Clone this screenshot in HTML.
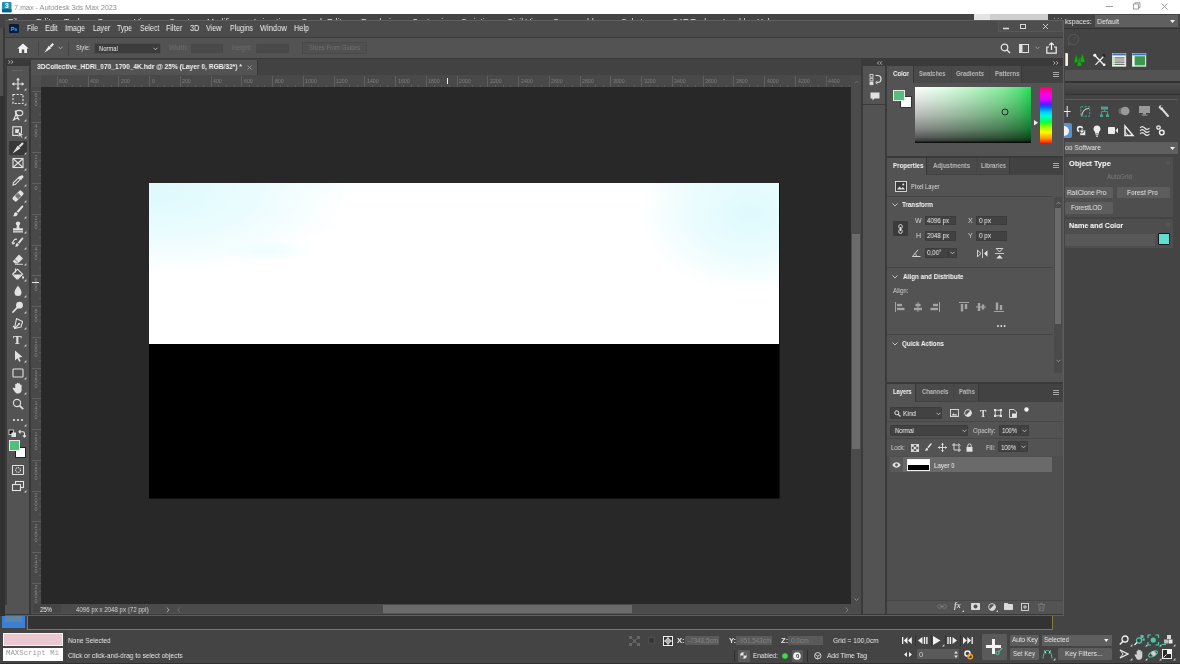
<!DOCTYPE html>
<html><head><meta charset="utf-8"><title>3ds Max / Photoshop</title>
<style>
*{box-sizing:border-box;margin:0;padding:0}
html,body{width:1180px;height:664px;overflow:hidden;background:#444;font-family:"Liberation Sans",sans-serif;}
.a{position:absolute}
.t{will-change:transform;position:absolute;white-space:nowrap;line-height:10px;height:10px;font-size:8px;color:#e4e4e4;transform:translateY(-50%)}
.b{font-weight:bold}
.d{color:#8a8a8a}
svg{position:absolute;overflow:visible}
#root{position:absolute;left:0;top:0;width:1180px;height:664px;overflow:hidden;background:#444;}
.fld{position:absolute;background:#454545;border:1px solid #3a3a3a}
.mbtn{position:absolute;background:#646464;border-radius:1px;color:#e6e6e6;font-size:8px;text-align:center;line-height:11px;white-space:nowrap}
</style></head><body><div id="root">

<!-- ===== 3ds Max chrome (behind) ===== -->
<div class="a" style="left:0;top:0;width:1180px;height:14px;background:#fff"></div>
<svg style="left:2.2px;top:1.5px" width="9.5" height="10.3" viewBox="0 0 9.5 10.3"><rect width="9.500" height="10.300" rx="1" fill="#1f93b4"/><rect x="0" y="7.300" width="9.500" height="3" fill="#0f5f78"/><text x="4.750" y="6.500" font-size="7" font-weight="bold" fill="#fff" text-anchor="middle" font-family="Liberation Sans, sans-serif">3</text></svg>
<div class="t " style="left:14px;top:7.5px;font-size:7.7px;color:#8c8c8c;transform:translateY(-50%) scaleX(0.936);transform-origin:0 50%;">7.max - Autodesk 3ds Max 2023</div>
<svg style="left:1100px;top:0px" width="80" height="14" viewBox="0 0 80 14"><g stroke="#8a8a8a" stroke-width="0.8" fill="none"><path d="M6 6.5h7"/><rect x="33.5" y="4" width="5" height="5"/><path d="M35 4v-1.3h5v5h-1.5"/><path d="M61.5 3.5l6 6m0-6l-6 6"/></g></svg>

<div class="a" style="left:0;top:14px;width:1180px;height:650px;background:#444"></div>
<div class="a" style="left:0;top:14px;width:1180px;height:8px;overflow:hidden;background:#444"><div class="t" style="left:7.5px;top:7.700px;font-size:8.5px;color:#dcdcdc">File</div><div class="t" style="left:35.5px;top:7.700px;font-size:8.5px;color:#dcdcdc">Edit</div><div class="t" style="left:64px;top:7.700px;font-size:8.5px;color:#dcdcdc">Tools</div><div class="t" style="left:97px;top:7.700px;font-size:8.5px;color:#dcdcdc">Group</div><div class="t" style="left:134px;top:7.700px;font-size:8.5px;color:#dcdcdc">Views</div><div class="t" style="left:169px;top:7.700px;font-size:8.5px;color:#dcdcdc">Create</div><div class="t" style="left:207px;top:7.700px;font-size:8.5px;color:#dcdcdc">Modifiers</div><div class="t" style="left:252px;top:7.700px;font-size:8.5px;color:#dcdcdc">Animation</div><div class="t" style="left:301px;top:7.700px;font-size:8.5px;color:#dcdcdc">Graph Editors</div><div class="t" style="left:361px;top:7.700px;font-size:8.5px;color:#dcdcdc">Rendering</div><div class="t" style="left:412px;top:7.700px;font-size:8.5px;color:#dcdcdc">Customize</div><div class="t" style="left:461px;top:7.700px;font-size:8.5px;color:#dcdcdc">Scripting</div><div class="t" style="left:507px;top:7.700px;font-size:8.5px;color:#dcdcdc">Civil View</div><div class="t" style="left:553px;top:7.700px;font-size:8.5px;color:#dcdcdc">Scene add-ons</div><div class="t" style="left:621px;top:7.700px;font-size:8.5px;color:#dcdcdc">Substance</div><div class="t" style="left:672px;top:7.700px;font-size:8.5px;color:#dcdcdc">CAT Tools</div><div class="t" style="left:721px;top:7.700px;font-size:8.5px;color:#dcdcdc">Arnold</div><div class="t" style="left:757px;top:7.700px;font-size:8.5px;color:#dcdcdc">Help</div></div>
<div class="a" style="left:974px;top:14px;width:74px;height:7px;background:#cfcfcf;"></div>
<div class="a" style="left:974px;top:14px;width:16px;height:7px;background:#e4e4e4;"></div>
<div class="t " style="left:1053px;top:18.7px;color:#aaa;font-size:8px;letter-spacing:1px">···</div>
<div class="a" style="left:0px;top:28px;width:3px;height:68px;background:#505050;"></div>
<div class="a" style="left:3px;top:28px;width:2.3px;height:68px;background:#383838;"></div>
<div class="a" style="left:0px;top:96px;width:5.3px;height:520.3px;background:#313131;"></div>

<div class="t " style="left:1064.7px;top:21.5px;font-size:7.6px;color:#e6e6e6;transform:translateY(-50%) scaleX(0.894);transform-origin:0 50%;">kspaces:</div>
<div class="a" style="left:1095px;top:15.4px;width:83px;height:11.6px;background:#5f5f5f;"></div>
<div class="t " style="left:1097px;top:21.5px;font-size:7.6px;color:#e6e6e6;transform:translateY(-50%) scaleX(0.914);transform-origin:0 50%;">Default</div>
<svg style="left:1169.5px;top:20px" width="5" height="3" viewBox="0 0 5 3"><path d="M0 0h5L2.500 3z" fill="#f2f2f2"/></svg>
<div class="a" style="left:1064px;top:27.5px;width:116px;height:1px;background:#333;"></div>
<svg style="left:1066.5px;top:32.5px" width="13" height="13" viewBox="0 0 13 13"><circle cx="6.500" cy="6.500" r="5.200" stroke="#5a5a5a" stroke-width="1" fill="none"/><path d="M6.500 6.500l2-2.500" stroke="#5a5a5a" stroke-width="0.900"/><path d="M2 9.500l-.5 2.500 2.200-.8" stroke="#5a5a5a" stroke-width="0.900" fill="none"/></svg>
<div class="a" style="left:1065px;top:52.6px;width:3px;height:13.6px;background:#f4efd8;border-left:1px solid #e0c060;border-radius:1px"></div>
<svg style="left:1072.9px;top:52.6px" width="13" height="13.6" viewBox="0 0 13 13.6"><path d="M3.200 1l2.200 8.500H1zM9.300 .3l2.800 9H6.500zM6.300 3.500l2.500 9.500H3.800z" fill="#1fa51f"/><path d="M3.200 1l2.200 8.500H1zM9.300 .3l2.800 9H6.500zM6.300 3.500l2.500 9.500H3.800z" fill="none" stroke="#0d6e0d" stroke-width="0.400"/></svg>
<svg style="left:1092.5px;top:52.6px" width="13" height="13.6" viewBox="0 0 13 13.6"><path d="M1.500 2l9.500 10" stroke="#f4f4f4" stroke-width="1.300" stroke-linecap="round"/><path d="M11.500 2.500L2.500 12" stroke="#f4f4f4" stroke-width="1.100"/><path d="M9 1.200l3 -.5 .8 2.600-2 1.200z" fill="#2a2a2a"/><circle cx="1.800" cy="2.200" r="1.500" fill="#f4f4f4"/><circle cx="11.200" cy="11.800" r="1.300" fill="#f4f4f4"/></svg>
<svg style="left:1112.2px;top:52.6px" width="14.2" height="13.6" viewBox="0 0 14.2 13.6"><rect x="0.400" y="0.400" width="13.400" height="12.800" fill="#f6f6f6" stroke="#dfeedd" stroke-width="0.800"/><rect x="0.400" y="0.400" width="13.400" height="2" fill="#3b6fc4"/><path d="M3 4.800h9.500M3 7h9.500M3 9.200h9.500M3 11.400h9.500" stroke="#6b6b6b" stroke-width="1.200"/><path d="M1.500 4.800h1M1.500 7h1M1.500 9.200h1M1.500 11.400h1" stroke="#2da12d" stroke-width="1.200"/></svg>
<svg style="left:1131.9px;top:52.6px" width="14.2" height="13.6" viewBox="0 0 14.2 13.6"><rect x="0.400" y="0.400" width="13.400" height="12.800" fill="#f6f6f6" stroke="#dfeedd" stroke-width="0.800"/><rect x="0.400" y="0.400" width="13.400" height="2" fill="#3b6fc4"/><rect x="2.600" y="3.200" width="10.400" height="9.200" fill="#3a9850"/></svg>
<div class="a" style="left:1064.7px;top:69.6px;width:115.3px;height:11.5px;background:#535353;"></div>
<div class="a" style="left:1064.7px;top:81.1px;width:115.3px;height:2px;background:#333;"></div>
<div class="a" style="left:1064.7px;top:83px;width:115.3px;height:10.5px;background:#4a4a4a;background:linear-gradient(#4e4e4e,#3e3e3e)"></div>
<div class="a" style="left:1064.7px;top:93.5px;width:115.3px;height:1.5px;background:#333;"></div>
<div class="a" style="left:1064.7px;top:98.5px;width:113.3px;height:1px;background:#5c5c5c;"></div>
<svg style="left:1064px;top:105.5px" width="6.5" height="11" viewBox="0 0 6.5 11"><path d="M3.200 0v11M0 5.500h6.500" stroke="#ececec" stroke-width="1"/></svg>
<svg style="left:1079.7px;top:105.5px" width="10.5" height="11" viewBox="0 0 10.5 11"><rect x="0.800" y="0.800" width="8.900" height="9.400" fill="none" stroke="#44a590" stroke-width="0.900" stroke-dasharray="2.500 1"/><path d="M1.800 9.800C2.200 5.500 4.500 2.800 9 2.200" stroke="#bdbdbd" stroke-width="1.100" fill="none"/></svg>
<svg style="left:1100px;top:105.5px" width="9" height="11" viewBox="0 0 9 11"><rect x="1" y="0.600" width="7" height="3" fill="#44a590"/><path d="M4.500 3.600v2M1.500 10.500v-5h6v5" stroke="#44a590" stroke-width="0.900" fill="none"/><rect x="0" y="8.500" width="3" height="2.500" fill="#44a590"/><rect x="6" y="8.500" width="3" height="2.500" fill="#44a590"/></svg>
<svg style="left:1118.3px;top:106px" width="12" height="10" viewBox="0 0 12 10"><circle cx="4" cy="5" r="3.600" fill="#6a6a6a"/><circle cx="7.200" cy="5" r="4.300" fill="#9a9a9a"/></svg>
<svg style="left:1138.6px;top:106px" width="11" height="10" viewBox="0 0 11 10"><rect x="0" y="0" width="11" height="7" fill="#9a9a9a"/><rect x="4" y="7" width="3" height="1.500" fill="#9a9a9a"/><rect x="2.500" y="8.600" width="6" height="1" fill="#9a9a9a"/></svg>
<svg style="left:1158.3px;top:105px" width="11" height="12" viewBox="0 0 11 12"><path d="M3.500 3.500l6.500 7.500" stroke="#dcdcdc" stroke-width="2" stroke-linecap="round"/><path d="M0.800 2.800c-.3-1.500 1-2.800 2.600-2.500L2.500 2l1 1 1.500-.8c.3 1.500-1 2.800-2.600 2.400z" fill="#dcdcdc"/></svg>
<div class="a" style="left:1064px;top:122.8px;width:8.3px;height:15px;background:#5b8fd0;border-radius:0 2px 2px 0"></div>
<svg style="left:1064px;top:125.5px" width="6" height="10" viewBox="0 0 6 10"><path d="M0 0a5 5 0 0 1 0 10z" fill="#f2f2f2"/></svg>
<svg style="left:1076px;top:125px" width="10" height="11" viewBox="0 0 10 11"><circle cx="4" cy="4" r="3.200" fill="#ececec"/><circle cx="4" cy="4" r="1.600" fill="#444"/><rect x="4" y="5" width="5.600" height="5.400" fill="#ececec" stroke="#444" stroke-width="0.600"/><circle cx="5.800" cy="5.800" r="2.200" fill="none" stroke="#444" stroke-width="0.800"/></svg>
<svg style="left:1092.5px;top:124.5px" width="8" height="12" viewBox="0 0 8 12"><path d="M4 .5a3.500 3.500 0 0 1 2 6.400V8.500H2V6.900A3.500 3.500 0 0 1 4 .5z" fill="#ececec"/><rect x="2.500" y="9.200" width="3" height="1" fill="#ececec"/><rect x="3" y="10.700" width="2" height="1" fill="#ececec"/></svg>
<svg style="left:1107.5px;top:126px" width="10" height="9" viewBox="0 0 10 9"><rect x="0" y="1" width="7" height="7" rx=".8" fill="#ececec"/><path d="M7.500 4.500L10 1.800v5.400z" fill="#ececec"/></svg>
<svg style="left:1123.7px;top:124.5px" width="9.5" height="11.5" viewBox="0 0 9.5 11.5"><path d="M1 1v9.500h8z" fill="none" stroke="#ececec" stroke-width="1.500"/><path d="M1 6.500l2.800 3.500" stroke="#ececec" stroke-width="0.800"/></svg>
<svg style="left:1140px;top:125.5px" width="9.5" height="10" viewBox="0 0 9.5 10"><path d="M0 2c1.500-1.800 3-1.800 4.700 0s3.200 1.800 4.800 0M0 5c1.500-1.800 3-1.800 4.700 0s3.200 1.800 4.800 0M0 8c1.500-1.800 3-1.800 4.700 0s3.200 1.800 4.800 0" stroke="#ececec" stroke-width="1.100" fill="none"/></svg>
<svg style="left:1156.3px;top:125px" width="9" height="11" viewBox="0 0 9 11"><circle cx="2.500" cy="2.500" r="1.700" stroke="#ececec" stroke-width="1.300" fill="none"/><circle cx="5.800" cy="7.500" r="2.300" stroke="#ececec" stroke-width="1.500" fill="none"/></svg>
<div class="a" style="left:1064.7px;top:141.8px;width:113.3px;height:12.2px;background:#5f5f5f;"></div>
<div class="t " style="left:1064.7px;top:148px;font-size:7.6px;color:#e6e6e6;transform:translateY(-50%) scaleX(0.888);transform-origin:0 50%;">oo Software</div>
<svg style="left:1169.5px;top:146.5px" width="5" height="3" viewBox="0 0 5 3"><path d="M0 0h5L2.500 3z" fill="#f2f2f2"/></svg>
<div class="a" style="left:1065.4px;top:157.4px;width:107.8px;height:59.2px;background:#4e4e4e;border-radius:1px"></div>
<div class="t b" style="left:1068.8px;top:163.9px;font-size:7.6px;color:#ffffff;transform:translateY(-50%) scaleX(0.969);transform-origin:0 50%;">Object Type</div>
<svg style="left:1165.5px;top:160.5px" width="4" height="4" viewBox="0 0 4 4"><path d="M0 1h4M0 3h4M1 0v4M3 0v4" stroke="#5e5e5e" stroke-width="0.600"/></svg>
<div class="t " style="left:1106.8px;top:177.3px;font-size:7.6px;color:#7c7c7c;transform:translateY(-50%) scaleX(0.834);transform-origin:0 50%;">AutoGrid</div>
<div class="a" style="left:1065.4px;top:186.8px;width:47.8px;height:11.5px;background:#5d5d5d;border-radius:1.500px"></div>
<div class="t " style="left:1066.8px;top:193px;font-size:7.4px;color:#e6e6e6;transform:translateY(-50%) scaleX(0.861);transform-origin:0 50%;">RailClone Pro</div>
<div class="a" style="left:1117px;top:186.8px;width:52.8px;height:11.5px;background:#5d5d5d;border-radius:1.500px"></div>
<div class="t " style="left:1127.1px;top:193px;font-size:7.4px;color:#e6e6e6;transform:translateY(-50%) scaleX(0.892);transform-origin:0 50%;">Forest Pro</div>
<div class="a" style="left:1065.4px;top:202.4px;width:47.8px;height:11.2px;background:#5d5d5d;border-radius:1.500px"></div>
<div class="t " style="left:1070.8px;top:208.2px;font-size:7.4px;color:#e6e6e6;transform:translateY(-50%) scaleX(0.862);transform-origin:0 50%;">ForestLOD</div>
<div class="a" style="left:1065.4px;top:219.3px;width:107.8px;height:28.5px;background:#4e4e4e;border-radius:1px"></div>
<div class="t b" style="left:1068.8px;top:225.7px;font-size:7.6px;color:#ffffff;transform:translateY(-50%) scaleX(0.930);transform-origin:0 50%;">Name and Color</div>
<svg style="left:1165.5px;top:222.5px" width="4" height="4" viewBox="0 0 4 4"><path d="M0 1h4M0 3h4M1 0v4M3 0v4" stroke="#5e5e5e" stroke-width="0.600"/></svg>
<div class="a" style="left:1065.4px;top:233.6px;width:89.6px;height:12.8px;background:#585858;border-radius:1px"></div>
<div class="a" style="left:1157.9px;top:233.2px;width:12.2px;height:12.2px;background:#5fdfd0;border:1px solid #151515;border-radius:1px"></div>

<div class="a" style="left:27px;top:614px;width:1026px;height:15.9px;background:#333333;border:1.7px solid #7f7d3e;border-top:none"></div>
<div class="a" style="left:2px;top:615.5px;width:23px;height:12.8px;background:#3a80d8;"></div>
<div class="a" style="left:5px;top:616.3px;width:17px;height:5.5px;background:#5f84a8;"></div>
<div class="a" style="left:0px;top:662.5px;width:1180px;height:1.5px;background:#303030;"></div>
<div class="a" style="left:3px;top:632.9px;width:60px;height:13.6px;background:#e9c8d0;border:1px solid #f6f6f6"></div>
<div class="a" style="left:3px;top:647.6px;width:60px;height:13.6px;background:#ffffff;"></div>
<div class="t " style="left:6.1px;top:652.8px;font-size:7.4px;color:#9a9a9a;font-family:'Liberation Mono',monospace;transform:translateY(-50%) scaleX(0.994);transform-origin:0 50%;">MAXScript Mi</div>
<div class="a" style="left:65px;top:631px;width:1px;height:32px;background:#3a3a3a;"></div>
<div class="t " style="left:68.3px;top:640.8px;font-size:7.4px;color:#e8e8e8;transform:translateY(-50%) scaleX(0.880);transform-origin:0 50%;">None Selected</div>
<div class="t " style="left:68.3px;top:656.2px;font-size:7.4px;color:#e8e8e8;transform:translateY(-50%) scaleX(0.894);transform-origin:0 50%;">Click or click-and-drag to select objects</div>
<svg style="left:629px;top:635.5px" width="11" height="10" viewBox="0 0 11 10"><path d="M1 1l9 8M10 1L1 9" stroke="#666" stroke-width="0.900"/><rect x="0" y="0" width="3" height="3" fill="#666"/><rect x="8" y="0" width="3" height="3" fill="#666"/><rect x="0" y="7" width="3" height="3" fill="#666"/><rect x="8" y="7" width="3" height="3" fill="#666"/><rect x="4" y="3.500" width="3" height="3" fill="#666"/></svg>
<svg style="left:647.5px;top:637px" width="7" height="7" viewBox="0 0 7 7"><rect x="0.500" y="0.500" width="6" height="6" fill="#3c3c3c" stroke="#505050" stroke-width="0.800"/><rect x="2.500" y="2" width="2" height="3" fill="#2e2e2e"/></svg>
<svg style="left:662.5px;top:635.5px" width="10" height="10" viewBox="0 0 10 10"><rect x="0.500" y="0.500" width="9" height="9" fill="#333" stroke="#f0f0f0" stroke-width="1"/><circle cx="5" cy="5" r="2.300" fill="none" stroke="#f0f0f0" stroke-width="1"/><path d="M5 1v8M1 5h8" stroke="#f0f0f0" stroke-width="0.900"/></svg>
<div class="t b" style="left:676.7px;top:640.8px;font-size:7.6px;color:#e8e8e8;">X:</div>
<div class="a" style="left:685.4px;top:636.2px;width:34px;height:8.8px;background:#5a5a5a;"></div>
<div class="t " style="left:687.5px;top:641px;font-size:7px;color:#858585;transform:translateY(-50%) scaleX(0.907);transform-origin:0 50%;">-7348,5cm</div>
<div class="t b" style="left:728.6px;top:640.8px;font-size:7.6px;color:#e8e8e8;">Y:</div>
<div class="a" style="left:736.4px;top:636.2px;width:36px;height:8.8px;background:#5a5a5a;"></div>
<div class="t " style="left:738px;top:641px;font-size:7px;color:#858585;transform:translateY(-50%) scaleX(0.893);transform-origin:0 50%;">-951,543cm</div>
<div class="t b" style="left:780.5px;top:640.8px;font-size:7.6px;color:#e8e8e8;">Z:</div>
<div class="a" style="left:788.2px;top:636.2px;width:34.6px;height:8.8px;background:#5a5a5a;"></div>
<div class="t " style="left:790.5px;top:641px;font-size:7px;color:#858585;transform:translateY(-50%) scaleX(0.918);transform-origin:0 50%;">0,0cm</div>
<div class="t " style="left:833.2px;top:640.8px;font-size:7.4px;color:#e8e8e8;transform:translateY(-50%) scaleX(0.902);transform-origin:0 50%;">Grid = 100,0cm</div>
<div class="a" style="left:733.5px;top:650px;width:1px;height:12px;background:#2e2e2e;"></div>
<div class="a" style="left:738px;top:650px;width:11.5px;height:11.5px;background:#5a5a5a;border-radius:1px"></div>
<svg style="left:740.2px;top:652.2px" width="7" height="7" viewBox="0 0 7 7"><circle cx="3.500" cy="3.500" r="3.300" fill="#e6e6e6"/><path d="M3.500 3.500V.2A3.300 3.300 0 0 1 6.800 3.500zM3.500 3.500V6.800A3.300 3.300 0 0 1 .2 3.500z" fill="#555"/></svg>
<div class="t " style="left:753px;top:655.9px;font-size:7.4px;color:#e8e8e8;transform:translateY(-50%) scaleX(0.856);transform-origin:0 50%;">Enabled:</div>
<svg style="left:782.4px;top:652.8px" width="6" height="6" viewBox="0 0 6 6"><circle cx="3" cy="3" r="2.800" fill="#3fdc4a"/></svg>
<div class="a" style="left:791.5px;top:650px;width:11.5px;height:11.5px;background:#5a5a5a;border-radius:1px"></div>
<svg style="left:793.2px;top:651.7px" width="8" height="8" viewBox="0 0 8 8"><circle cx="4" cy="4" r="3.800" fill="#f6f6f6"/></svg>
<div class="t b" style="left:795.6px;top:655.9px;font-size:6px;color:#333;">0</div>
<div class="a" style="left:807px;top:650px;width:1px;height:12px;background:#2e2e2e;"></div>
<svg style="left:813.5px;top:652.3px" width="7.5" height="7.5" viewBox="0 0 7.5 7.5"><circle cx="3.750" cy="3.750" r="3.200" fill="none" stroke="#dcdcdc" stroke-width="0.900"/><path d="M1 2.500l2.750 1.500 2.750-1.500M3.750 4v3" stroke="#dcdcdc" stroke-width="0.800" fill="none"/></svg>
<div class="t " style="left:827px;top:656px;font-size:7.4px;color:#e8e8e8;transform:translateY(-50%) scaleX(0.887);transform-origin:0 50%;">Add Time Tag</div>
<svg style="left:902.3px;top:636.8px" width="10" height="7" viewBox="0 0 10 7"><rect x="0" y="0" width="1.300" height="7" fill="#f0f0f0"/><path d="M5.500 0v7L1.800 3.500zM9.800 0v7L6 3.500z" fill="#f0f0f0"/></svg>
<div class="a" style="left:915px;top:635px;width:1px;height:11px;background:#333;"></div>
<svg style="left:918.3px;top:636.8px" width="10" height="7" viewBox="0 0 10 7"><path d="M4.500 0v7L0 3.500z" fill="#f0f0f0"/><rect x="5.800" y="0" width="1.400" height="7" fill="#f0f0f0"/><rect x="8.200" y="0" width="1.400" height="7" fill="#f0f0f0"/></svg>
<div class="a" style="left:930.5px;top:635px;width:1px;height:11px;background:#333;"></div>
<svg style="left:933px;top:636px" width="8" height="9" viewBox="0 0 8 9"><path d="M0 0v9l7.500-4.500z" fill="#f0f0f0"/></svg>
<svg style="left:941.5px;top:644px" width="2.4" height="2.4" viewBox="0 0 2.4 2.4"><path d="M2.400 0v2.400H0z" fill="#d0d0d0"/></svg>
<div class="a" style="left:944.5px;top:635px;width:1px;height:11px;background:#333;"></div>
<svg style="left:947px;top:636.8px" width="10" height="7" viewBox="0 0 10 7"><rect x="0.300" y="0" width="1.400" height="7" fill="#f0f0f0"/><rect x="2.700" y="0" width="1.400" height="7" fill="#f0f0f0"/><path d="M5.500 0v7L10 3.500z" fill="#f0f0f0"/></svg>
<div class="a" style="left:959.5px;top:635px;width:1px;height:11px;background:#333;"></div>
<svg style="left:962.5px;top:636.8px" width="10" height="7" viewBox="0 0 10 7"><path d="M0 0v7l3.800-3.500zM4.300 0v7L8 3.500z" fill="#f0f0f0"/><rect x="8.500" y="0" width="1.300" height="7" fill="#f0f0f0"/></svg>
<svg style="left:903.5px;top:652px" width="8" height="5" viewBox="0 0 8 5"><path d="M3 0v5L0 2.500zM5 0v5l3-2.500z" fill="#f0f0f0"/></svg>
<div class="a" style="left:916.5px;top:649.4px;width:42px;height:9.8px;background:#5a5a5a;"></div>
<div class="t " style="left:919px;top:654.5px;font-size:7.6px;color:#d0d0d0;">0</div>
<svg style="left:953.5px;top:651px" width="4" height="7" viewBox="0 0 4 7"><path d="M2 0l1.800 2.500H.2zM2 7l1.800-2.500H.2z" fill="#e8e8e8"/></svg>
<svg style="left:963.5px;top:649.5px" width="9.5" height="10" viewBox="0 0 9.5 10"><circle cx="3.500" cy="3.500" r="2.600" fill="none" stroke="#f0f0f0" stroke-width="1.500"/><circle cx="6.200" cy="6.500" r="2.300" fill="none" stroke="#e8962a" stroke-width="1.400"/></svg>
<div class="a" style="left:982.2px;top:634.1px;width:25.3px;height:26px;background:#5a5a5a;border-radius:1.500px"></div>
<svg style="left:986px;top:639px" width="18" height="18" viewBox="0 0 18 18"><path d="M7.500 0v15M0 7.500h15" stroke="#f4f4f4" stroke-width="3"/><circle cx="11.500" cy="14" r="1.700" fill="none" stroke="#4fc8a8" stroke-width="1"/><path d="M12.700 12.800l3.500-3.800" stroke="#4fc8a8" stroke-width="1.100"/></svg>
<div class="a" style="left:1010.4px;top:634.6px;width:28.3px;height:11.1px;background:#5d5d5d;border-radius:1.500px"></div>
<div class="t " style="left:1011.7px;top:640.4px;font-size:7.4px;color:#e8e8e8;transform:translateY(-50%) scaleX(0.859);transform-origin:0 50%;">Auto Key</div>
<div class="a" style="left:1010.4px;top:648.4px;width:28.3px;height:11.6px;background:#5d5d5d;border-radius:1.500px"></div>
<div class="t " style="left:1012.9px;top:654.4px;font-size:7.4px;color:#e8e8e8;transform:translateY(-50%) scaleX(0.853);transform-origin:0 50%;">Set Key</div>
<div class="a" style="left:1041.9px;top:634.6px;width:70px;height:11.1px;background:#5f5f5f;"></div>
<div class="t " style="left:1044.3px;top:640.3px;font-size:7.4px;color:#e8e8e8;transform:translateY(-50%) scaleX(0.872);transform-origin:0 50%;">Selected</div>
<svg style="left:1103.5px;top:639px" width="4.5" height="3" viewBox="0 0 4.5 3"><path d="M0 0h4.500L2.250 3z" fill="#f2f2f2"/></svg>
<svg style="left:1042.4px;top:649px" width="11" height="10" viewBox="0 0 11 10"><path d="M1 9.500C1.500 4 3 1.500 5.500 1.500S9.500 4 10 9.500" stroke="#4fc8a8" stroke-width="1" fill="none"/><path d="M2.500 1.500l1.500 3M8.500 1.500L7 4.500" stroke="#e8e8e8" stroke-width="0.900"/></svg>
<svg style="left:1052.5px;top:657.5px" width="2.4" height="2.4" viewBox="0 0 2.4 2.4"><path d="M2.400 0v2.400H0z" fill="#d0d0d0"/></svg>
<div class="a" style="left:1057.9px;top:648.4px;width:54px;height:11.6px;background:#5d5d5d;border-radius:1.500px"></div>
<div class="t " style="left:1065px;top:654.4px;font-size:7.4px;color:#e8e8e8;transform:translateY(-50%) scaleX(0.914);transform-origin:0 50%;">Key Filters...</div>
<svg style="left:1119px;top:635px" width="10" height="10" viewBox="0 0 10 10"><circle cx="6" cy="4" r="3" fill="none" stroke="#f0f0f0" stroke-width="1.300"/><path d="M4 6.200L.8 9.500" stroke="#f0f0f0" stroke-width="1.500"/></svg>
<svg style="left:1133.5px;top:635px" width="11" height="10" viewBox="0 0 11 10"><circle cx="5" cy="5.500" r="2.600" fill="none" stroke="#4fc8a8" stroke-width="1.200"/><path d="M3 7.500L.5 10" stroke="#f0f0f0" stroke-width="1.300"/><rect x="6.500" y="0" width="3" height="3" fill="#4fc8a8"/><rect x="8.500" y="3.500" width="2.200" height="2.200" fill="#4fc8a8"/></svg>
<svg style="left:1147.5px;top:635px" width="10.5" height="10" viewBox="0 0 10.5 10"><path d="M0 3V0h3M7.500 0h3v3M10.500 7v3h-3M3 10H0V7" stroke="#4fc8a8" stroke-width="1.200" fill="none"/><circle cx="5.250" cy="5" r="2.600" fill="#4fc8a8"/></svg>
<svg style="left:1162px;top:635px" width="11" height="10" viewBox="0 0 11 10"><rect x="5" y="0" width="4" height="4" fill="#d8d8d8"/><rect x="2" y="4.500" width="4" height="4" fill="#bdbdbd"/><rect x="6.500" y="4.500" width="4" height="4" fill="#e8e8e8"/><path d="M0 9.500h4" stroke="#4fc8a8" stroke-width="1"/></svg>
<svg style="left:1119px;top:649px" width="10" height="10" viewBox="0 0 10 10"><path d="M1 1l8 4-8 4" stroke="#f0f0f0" stroke-width="1.300" fill="none"/><path d="M1 1l3 4-3 4" stroke="#f0f0f0" stroke-width="0.900" fill="none"/></svg>
<svg style="left:1134px;top:648.5px" width="10" height="11" viewBox="0 0 10 11"><path d="M2.700 5.500V2.300a.7.700 0 0 1 1.400 0V4.500 1.300a.7.700 0 0 1 1.400 0V4.500 1.800a.7.700 0 0 1 1.400 0V5 3a.7.700 0 0 1 1.400 0V7.500c0 1.800-1.200 3.300-3.200 3.300-1.600 0-2.300-.7-3-1.900L.7 6.300c-.3-.7.500-1.300 1-.7z" fill="#d0d0d0"/></svg>
<svg style="left:1147.5px;top:649px" width="11" height="10" viewBox="0 0 11 10"><ellipse cx="5" cy="5" rx="4.800" ry="2.200" fill="none" stroke="#4fc8a8" stroke-width="1.100" transform="rotate(-30 5 5)"/><circle cx="5.500" cy="4.500" r="2.400" fill="#d0d0d0"/></svg>
<svg style="left:1162px;top:649px" width="10" height="10" viewBox="0 0 10 10"><rect x="0.500" y="0.500" width="9" height="9" fill="#2a2a2a" stroke="#f0f0f0" stroke-width="1"/><path d="M5 .5h4.500V5H5z" fill="#f0f0f0"/><path d="M1.500 8.500l3-3" stroke="#f0f0f0" stroke-width="1"/></svg>
<svg style="left:1130px;top:657.5px" width="2.4" height="2.4" viewBox="0 0 2.4 2.4"><path d="M2.400 0v2.400H0z" fill="#d0d0d0"/></svg>
<svg style="left:1130px;top:643.5px" width="2.4" height="2.4" viewBox="0 0 2.4 2.4"><path d="M2.400 0v2.400H0z" fill="#d0d0d0"/></svg>
<svg style="left:1144.5px;top:657.5px" width="2.4" height="2.4" viewBox="0 0 2.4 2.4"><path d="M2.400 0v2.400H0z" fill="#d0d0d0"/></svg>
<svg style="left:1144.5px;top:643.5px" width="2.4" height="2.4" viewBox="0 0 2.4 2.4"><path d="M2.400 0v2.400H0z" fill="#d0d0d0"/></svg>
<svg style="left:1158.5px;top:657.5px" width="2.4" height="2.4" viewBox="0 0 2.4 2.4"><path d="M2.400 0v2.400H0z" fill="#d0d0d0"/></svg>
<svg style="left:1158.5px;top:643.5px" width="2.4" height="2.4" viewBox="0 0 2.4 2.4"><path d="M2.400 0v2.400H0z" fill="#d0d0d0"/></svg>
<svg style="left:1172.5px;top:657.5px" width="2.4" height="2.4" viewBox="0 0 2.4 2.4"><path d="M2.400 0v2.400H0z" fill="#d0d0d0"/></svg>
<svg style="left:1172.5px;top:643.5px" width="2.4" height="2.4" viewBox="0 0 2.4 2.4"><path d="M2.400 0v2.400H0z" fill="#d0d0d0"/></svg>


<!-- ===== Photoshop window ===== -->
<div class="a" style="left:4.5px;top:20.3px;width:1059.5px;height:596px;background:#5e5e5e"></div>
<div class="a" style="left:5.3px;top:21px;width:1057.9px;height:594.3px;background:#535353"></div>
<div class="a" style="left:5px;top:21px;width:1058px;height:16px;background:#4b4b4b;"></div>
<div class="a" style="left:5px;top:37px;width:1058px;height:1px;background:#3a3a3a;"></div>
<svg style="left:9px;top:24px" width="10" height="9" viewBox="0 0 10 9"><rect width="10" height="9" rx="1.2" fill="#0a1e3c"/><text x="5" y="6.6" font-size="5.5" font-weight="bold" fill="#46a8ff" text-anchor="middle" font-family="Liberation Sans, sans-serif">Ps</text></svg>
<div class="t " style="left:27.1px;top:29px;font-size:8.2px;color:#f0f0f0;transform:translateY(-50%) scaleX(0.825);transform-origin:0 50%;">File</div>
<div class="t " style="left:45.4px;top:29px;font-size:8.2px;color:#f0f0f0;transform:translateY(-50%) scaleX(0.892);transform-origin:0 50%;">Edit</div>
<div class="t " style="left:65px;top:29px;font-size:8.2px;color:#f0f0f0;transform:translateY(-50%) scaleX(0.878);transform-origin:0 50%;">Image</div>
<div class="t " style="left:92.5px;top:29px;font-size:8.2px;color:#f0f0f0;transform:translateY(-50%) scaleX(0.843);transform-origin:0 50%;">Layer</div>
<div class="t " style="left:117.3px;top:29px;font-size:8.2px;color:#f0f0f0;transform:translateY(-50%) scaleX(0.838);transform-origin:0 50%;">Type</div>
<div class="t " style="left:140px;top:29px;font-size:8.2px;color:#f0f0f0;transform:translateY(-50%) scaleX(0.847);transform-origin:0 50%;">Select</div>
<div class="t " style="left:166.4px;top:29px;font-size:8.2px;color:#f0f0f0;transform:translateY(-50%) scaleX(0.895);transform-origin:0 50%;">Filter</div>
<div class="t " style="left:189.5px;top:29px;font-size:8.2px;color:#f0f0f0;transform:translateY(-50%) scaleX(0.906);transform-origin:0 50%;">3D</div>
<div class="t " style="left:206.4px;top:29px;font-size:8.2px;color:#f0f0f0;transform:translateY(-50%) scaleX(0.868);transform-origin:0 50%;">View</div>
<div class="t " style="left:229.5px;top:29px;font-size:8.2px;color:#f0f0f0;transform:translateY(-50%) scaleX(0.855);transform-origin:0 50%;">Plugins</div>
<div class="t " style="left:260px;top:29px;font-size:8.2px;color:#f0f0f0;transform:translateY(-50%) scaleX(0.919);transform-origin:0 50%;">Window</div>
<div class="t " style="left:294.2px;top:29px;font-size:8.2px;color:#f0f0f0;transform:translateY(-50%) scaleX(0.889);transform-origin:0 50%;">Help</div>
<div class="a" style="left:998px;top:21px;width:64.5px;height:10.8px;background:#4e4e4e;border:1px solid #575757;border-top:none"></div>
<svg style="left:997px;top:21px" width="66" height="13" viewBox="0 0 66 13"><g stroke="#d8d8d8" stroke-width="1" fill="none"><path d="M6 7.500h6" stroke-width="1.600"/><rect x="23.5" y="3.5" width="5" height="4"/><path d="M46 3l5 5m0-5l-5 5" stroke-width="0.9"/></g></svg>

<div class="a" style="left:5px;top:38px;width:1058px;height:20px;background:#535353;"></div>
<div class="a" style="left:5px;top:58px;width:1058px;height:1px;background:#3a3a3a;"></div>
<svg style="left:17px;top:43px" width="12" height="10" viewBox="0 0 12 10"><path d="M6 0.5L0.3 5.6h1.7V10h2.8V6.6h2.4V10H10V5.6h1.7z" fill="#f0f0f0"/></svg>
<div class="a" style="left:38px;top:41px;width:1px;height:15px;background:#464646;"></div>
<svg style="left:44px;top:43px" width="10" height="10" viewBox="0 0 10 10"><path d="M0.300 9.700L4.800 2.800 7.200 5.200z" fill="#ececec"/><path d="M6.300 3.700L9.300.7" stroke="#ececec" stroke-width="2"/></svg>
<svg style="left:58px;top:46px" width="5" height="4" viewBox="0 0 5 4"><path d="M0.5 0.8l2 2 2-2" stroke="#bdbdbd" stroke-width="0.8" fill="none"/></svg>
<div class="a" style="left:68px;top:41px;width:1px;height:15px;background:#464646;"></div>
<div class="t " style="left:75.8px;top:48px;font-size:7.2px;color:#dcdcdc;transform:translateY(-50%) scaleX(0.789);transform-origin:0 50%;">Style:</div>
<div class="a" style="left:94px;top:43px;width:67px;height:11px;background:#3c3c3c;border:1px solid #4c4c4c;border-radius:1px"></div>
<div class="t " style="left:99px;top:48.5px;font-size:7.2px;color:#f0f0f0;transform:translateY(-50%) scaleX(0.810);transform-origin:0 50%;">Normal</div>
<svg style="left:153px;top:47px" width="5" height="4" viewBox="0 0 5 4"><path d="M0.5 0.8l2 2 2-2" stroke="#cfcfcf" stroke-width="0.8" fill="none"/></svg>
<div class="t " style="left:168.8px;top:48px;font-size:7.2px;color:#6e6e6e;transform:translateY(-50%) scaleX(0.931);transform-origin:0 50%;">Width:</div>
<div class="a" style="left:191px;top:44px;width:32px;height:9px;background:#4a4a4a;border:1px solid #484848"></div>
<div class="t " style="left:231.5px;top:48px;font-size:7.2px;color:#6e6e6e;transform:translateY(-50%) scaleX(0.877);transform-origin:0 50%;">Height:</div>
<div class="a" style="left:256px;top:44px;width:33px;height:9px;background:#4a4a4a;border:1px solid #484848"></div>
<div class="a" style="left:302px;top:42px;width:65px;height:12px;background:#505050;border:1px solid #494949;border-radius:1px"></div>
<div class="t " style="left:308.5px;top:48px;font-size:7.2px;color:#717171;transform:translateY(-50%) scaleX(0.820);transform-origin:0 50%;">Slices From Guides</div>
<svg style="left:1000px;top:43px" width="11" height="11" viewBox="0 0 11 11"><circle cx="4.5" cy="4.5" r="3.3" stroke="#e6e6e6" stroke-width="1.2" fill="none"/><path d="M7 7l3 3" stroke="#e6e6e6" stroke-width="1.4"/></svg>
<svg style="left:1019px;top:44px" width="10" height="9" viewBox="0 0 10 9"><rect x="0.5" y="0.5" width="9" height="8" stroke="#e0e0e0" fill="none"/><rect x="1" y="1" width="2.5" height="7" fill="#e0e0e0"/></svg>
<svg style="left:1035px;top:46px" width="5" height="4" viewBox="0 0 5 4"><path d="M0.5 0.8l2 2 2-2" stroke="#a8a8a8" stroke-width="0.8" fill="none"/></svg>
<svg style="left:1046px;top:42px" width="11" height="12" viewBox="0 0 11 12"><path d="M3 5H0.8v6.2h9.4V5H8" stroke="#f0f0f0" stroke-width="1.2" fill="none"/><path d="M5.5 8V1.2M3.2 3.2L5.5 0.9l2.3 2.3" stroke="#f0f0f0" stroke-width="1.2" fill="none"/></svg>

<div class="a" style="left:5.3px;top:58px;width:26px;height:547px;background:#3c3c3c;"></div>
<div class="a" style="left:6px;top:58px;width:24px;height:8px;background:#3a3a3a;"></div>
<div class="a" style="left:6.5px;top:66px;width:22.5px;height:547.5px;background:#535353;"></div>
<div class="a" style="left:29px;top:58px;width:2px;height:555.5px;background:#383838;"></div>
<svg style="left:8px;top:60px" width="6" height="4" viewBox="0 0 6 4"><path d="M0.5 0.3l1.6 1.7-1.6 1.7M3.3 0.3l1.6 1.7-1.6 1.7" stroke="#cfcfcf" stroke-width="0.8" fill="none"/></svg>
<div class="a" style="left:12px;top:70px;width:11px;height:1px;background:#646464;"></div>
<div class="a" style="left:8.6px;top:140.5px;width:18px;height:14px;background:#383838;border-radius:1px"></div>
<svg style="left:11.6px;top:78.2px" width="12" height="12" viewBox="0 0 12 12"><path d="M6 0.3v11.4M0.3 6h11.4" stroke="#e2e2e2" fill="none" stroke-width="1.1"/><path d="M6 0l1.9 2.3H4.1zM6 12l1.9-2.3H4.1zM0 6l2.3-1.9v3.8zM12 6L9.7 4.1v3.8z" fill="#e2e2e2"/></svg>
<svg style="left:24.3px;top:88.4px" width="2.4" height="2.4" viewBox="0 0 2.4 2.4"><path d="M2.4 0v2.4H0z" fill="#d0d0d0"/></svg>
<svg style="left:11.6px;top:93px" width="12" height="12" viewBox="0 0 12 12"><rect x="1" y="1.5" width="10" height="9" stroke="#e2e2e2" fill="none" stroke-width="1.1" stroke-dasharray="2.2 1.4"/></svg>
<svg style="left:24.3px;top:103.2px" width="2.4" height="2.4" viewBox="0 0 2.4 2.4"><path d="M2.4 0v2.4H0z" fill="#d0d0d0"/></svg>
<svg style="left:11.6px;top:109px" width="12" height="12" viewBox="0 0 12 12"><ellipse cx="7.2" cy="4" rx="3.6" ry="2.6" stroke="#e2e2e2" fill="none" stroke-width="1.1"/><path d="M4 5.5L1.5 11l4-2.2 1.8 2.4z" stroke="#e2e2e2" fill="none" stroke-width="1.1" stroke-width="0.9"/><path d="M3 1.5l2.5 5" stroke="#e2e2e2" fill="none" stroke-width="1.1" stroke-width="0.9"/></svg>
<svg style="left:24.3px;top:119.2px" width="2.4" height="2.4" viewBox="0 0 2.4 2.4"><path d="M2.4 0v2.4H0z" fill="#d0d0d0"/></svg>
<svg style="left:11.6px;top:125.5px" width="12" height="12" viewBox="0 0 12 12"><rect x="0.8" y="0.8" width="8.6" height="8.6" stroke="#e2e2e2" fill="none" stroke-width="1.1"/><rect x="3.2" y="3.2" width="3.8" height="3.8" fill="#e2e2e2"/><path d="M6.5 5.8l5 3-2.3.5 1.2 2.2-1 .5-1.2-2.3-1.7 1.6z" fill="#e2e2e2" stroke="#535353" stroke-width="0.4"/></svg>
<svg style="left:24.3px;top:135.7px" width="2.4" height="2.4" viewBox="0 0 2.4 2.4"><path d="M2.4 0v2.4H0z" fill="#d0d0d0"/></svg>
<svg style="left:11.6px;top:142px" width="12" height="12" viewBox="0 0 12 12"><path d="M0.500 11.500L5.800 3.500 8.500 6.200z" fill="#e2e2e2"/><path d="M7.500 4.500L11 1" stroke="#e2e2e2" stroke-width="2.200"/></svg>
<svg style="left:24.3px;top:152.2px" width="2.4" height="2.4" viewBox="0 0 2.4 2.4"><path d="M2.4 0v2.4H0z" fill="#d0d0d0"/></svg>
<svg style="left:11.6px;top:157.3px" width="12" height="12" viewBox="0 0 12 12"><rect x="1" y="1.5" width="10" height="9" stroke="#e2e2e2" fill="none" stroke-width="1.1"/><path d="M1 1.5l10 9M11 1.5l-10 9" stroke="#e2e2e2" fill="none" stroke-width="1.1" stroke-width="0.9"/></svg>
<svg style="left:24.3px;top:167.5px" width="2.4" height="2.4" viewBox="0 0 2.4 2.4"><path d="M2.4 0v2.4H0z" fill="#d0d0d0"/></svg>
<svg style="left:11.6px;top:173.5px" width="12" height="12" viewBox="0 0 12 12"><path d="M1 11l.4-2.2 5-5 1.8 1.8-5 5z" stroke="#e2e2e2" fill="none" stroke-width="1.1" stroke-width="0.9"/><path d="M6 3l3 3 2.3-2.6c.8-1-1-2.8-2-2z" fill="#e2e2e2"/></svg>
<svg style="left:24.3px;top:183.7px" width="2.4" height="2.4" viewBox="0 0 2.4 2.4"><path d="M2.4 0v2.4H0z" fill="#d0d0d0"/></svg>
<svg style="left:11.6px;top:189.5px" width="12" height="12" viewBox="0 0 12 12"><g transform="rotate(-45 6 6)"><rect x="0" y="3.2" width="12" height="5.6" rx="1.6" fill="#e2e2e2"/><rect x="4" y="3.9" width="4" height="4.2" fill="#535353"/><circle cx="5.2" cy="5.2" r=".5" fill="#e2e2e2"/><circle cx="6.8" cy="5.2" r=".5" fill="#e2e2e2"/><circle cx="5.2" cy="6.8" r=".5" fill="#e2e2e2"/><circle cx="6.8" cy="6.8" r=".5" fill="#e2e2e2"/></g></svg>
<svg style="left:24.3px;top:199.7px" width="2.4" height="2.4" viewBox="0 0 2.4 2.4"><path d="M2.4 0v2.4H0z" fill="#d0d0d0"/></svg>
<svg style="left:11.6px;top:205.3px" width="12" height="12" viewBox="0 0 12 12"><path d="M11 .8c.6.5.3 1.2-.2 1.8L6.3 7.8 4.6 6.4 9.2 1.2c.5-.6 1.2-.9 1.800-.4z" fill="#e2e2e2"/><path d="M4 7.200c1 .2 1.700.9 1.700 1.800C5.600 10.800 3.500 11.500 1 11.200c1-.8.800-1.600 1.200-2.600.3-.8 1-1.500 1.800-1.400z" fill="#e2e2e2"/></svg>
<svg style="left:24.3px;top:215.5px" width="2.4" height="2.4" viewBox="0 0 2.4 2.4"><path d="M2.4 0v2.4H0z" fill="#d0d0d0"/></svg>
<svg style="left:11.6px;top:221px" width="12" height="12" viewBox="0 0 12 12"><circle cx="6" cy="2.600" r="2.200" fill="#e2e2e2"/><path d="M5 4h2l.5 3.200H11v2.200H1V7.200h3.500z" fill="#e2e2e2"/><rect x="1" y="10.200" width="10" height="1.300" fill="#e2e2e2"/></svg>
<svg style="left:24.3px;top:231.2px" width="2.4" height="2.4" viewBox="0 0 2.4 2.4"><path d="M2.4 0v2.4H0z" fill="#d0d0d0"/></svg>
<svg style="left:11.6px;top:236.8px" width="12" height="12" viewBox="0 0 12 12"><path d="M11 .8c.6.5.3 1.200-.2 1.800L7.300 6.800 5.800 5.600 9.400 1.200c.5-.6 1.100-.9 1.600-.4z" fill="#e2e2e2"/><path d="M5.200 6.200c.9.200 1.500.8 1.500 1.600 0 1.400-1.800 2-3.800 1.800.8-.7.700-1.400 1-2.200.2-.7.700-1.200 1.300-1.200z" fill="#e2e2e2"/><path d="M1 6.500A3.500 3.500 0 0 1 5 2.200" stroke="#e2e2e2" fill="none" stroke-width="1.1" stroke-width="0.9"/><path d="M0 5l1 2 1.800-1.300" stroke="#e2e2e2" fill="none" stroke-width="1.1" stroke-width="0.9"/></svg>
<svg style="left:24.3px;top:247.0px" width="2.4" height="2.4" viewBox="0 0 2.4 2.4"><path d="M2.4 0v2.4H0z" fill="#d0d0d0"/></svg>
<svg style="left:11.6px;top:252.60000000000002px" width="12" height="12" viewBox="0 0 12 12"><path d="M7 1.500l4 4-5 5H3l-2.200-2.200z" fill="#e2e2e2"/><path d="M2.500 6l3.500 3.500" stroke="#535353" stroke-width="0.800"/><path d="M3 11.300h8" stroke="#e2e2e2" stroke-width="0.9"/></svg>
<svg style="left:24.3px;top:262.8px" width="2.4" height="2.4" viewBox="0 0 2.4 2.4"><path d="M2.4 0v2.4H0z" fill="#d0d0d0"/></svg>
<svg style="left:11.6px;top:268.4px" width="12" height="12" viewBox="0 0 12 12"><path d="M5.500 1.200l5 5-4.300 4.300c-.5.500-1.200.5-1.700 0L1.200 7.200c-.5-.5-.5-1.200 0-1.700z" stroke="#e2e2e2" fill="none" stroke-width="1.1"/><path d="M1.300 6.500h8.700l-4 4-1.500-.2z" fill="#e2e2e2"/><path d="M3.500 .5v4" stroke="#e2e2e2" fill="none" stroke-width="1.1" stroke-width="0.9"/><path d="M11 7.500c.8 1.200 1 1.800 1 2.300a1 1 0 0 1-2 0c0-.5.200-1.100 1-2.300z" fill="#e2e2e2"/></svg>
<svg style="left:24.3px;top:278.59999999999997px" width="2.4" height="2.4" viewBox="0 0 2.4 2.4"><path d="M2.4 0v2.4H0z" fill="#d0d0d0"/></svg>
<svg style="left:11.6px;top:285px" width="12" height="12" viewBox="0 0 12 12"><path d="M6 .8c2.300 3 3.500 5 3.500 6.700a3.500 3.500 0 0 1-7 0C2.500 5.800 3.700 3.800 6 .8z" fill="#e2e2e2"/></svg>
<svg style="left:24.3px;top:295.2px" width="2.4" height="2.4" viewBox="0 0 2.4 2.4"><path d="M2.4 0v2.4H0z" fill="#d0d0d0"/></svg>
<svg style="left:11.6px;top:301px" width="12" height="12" viewBox="0 0 12 12"><circle cx="7.500" cy="4.200" r="3.400" fill="#e2e2e2"/><path d="M5 6.800L1 11" stroke="#e2e2e2" stroke-width="1.800" stroke-linecap="round"/></svg>
<svg style="left:24.3px;top:311.2px" width="2.4" height="2.4" viewBox="0 0 2.4 2.4"><path d="M2.4 0v2.4H0z" fill="#d0d0d0"/></svg>
<svg style="left:11.6px;top:317px" width="12" height="12" viewBox="0 0 12 12"><path d="M4.500 1.500l6 3-1.500 5.500-6.500 1.500z" stroke="#e2e2e2" fill="none" stroke-width="1.1" stroke-linejoin="round"/><path d="M2.500 11.500L7 7" stroke="#e2e2e2" fill="none" stroke-width="1.1" stroke-width="0.9"/><circle cx="7.200" cy="6.800" r="1" fill="#e2e2e2"/><path d="M1 9l2 2" stroke="#e2e2e2" fill="none" stroke-width="1.1"/></svg>
<svg style="left:24.3px;top:327.2px" width="2.4" height="2.4" viewBox="0 0 2.4 2.4"><path d="M2.4 0v2.4H0z" fill="#d0d0d0"/></svg>
<div class="t b" style="left:12.8px;top:339.5px;font-size:13px;color:#e2e2e2;font-family:'Liberation Serif',serif;line-height:14px;height:14px">T</div>
<svg style="left:24.3px;top:343.7px" width="2.4" height="2.4" viewBox="0 0 2.4 2.4"><path d="M2.400 0v2.400H0z" fill="#d0d0d0"/></svg>
<svg style="left:11.6px;top:350px" width="12" height="12" viewBox="0 0 12 12"><path d="M3 .5v10l2.500-2.300 1.700 3.500 1.500-.7-1.700-3.400L10.500 7z" fill="#e2e2e2"/></svg>
<svg style="left:24.3px;top:360.2px" width="2.4" height="2.4" viewBox="0 0 2.4 2.4"><path d="M2.4 0v2.4H0z" fill="#d0d0d0"/></svg>
<svg style="left:11.6px;top:366.5px" width="12" height="12" viewBox="0 0 12 12"><rect x="1" y="2" width="10" height="8" rx=".8" stroke="#e2e2e2" fill="none" stroke-width="1.1"/></svg>
<svg style="left:24.3px;top:376.7px" width="2.4" height="2.4" viewBox="0 0 2.4 2.4"><path d="M2.4 0v2.4H0z" fill="#d0d0d0"/></svg>
<svg style="left:11.6px;top:382px" width="12" height="12" viewBox="0 0 12 12"><path d="M3.200 6V2.500a.8.800 0 0 1 1.600 0V5 1.500a.8.800 0 0 1 1.600 0V5 2a.8.800 0 0 1 1.600 0v3.500V3.200a.8.800 0 0 1 1.600 0V8c0 2-1.300 3.600-3.600 3.600-1.800 0-2.600-.8-3.400-2.100L.8 6.800c-.4-.8.500-1.400 1.100-.8z" fill="#e2e2e2"/></svg>
<svg style="left:24.3px;top:392.2px" width="2.4" height="2.4" viewBox="0 0 2.4 2.4"><path d="M2.4 0v2.4H0z" fill="#d0d0d0"/></svg>
<svg style="left:11.6px;top:397.5px" width="12" height="12" viewBox="0 0 12 12"><circle cx="5" cy="5" r="3.600" stroke="#e2e2e2" fill="none" stroke-width="1.1" stroke-width="1.300"/><path d="M7.600 7.600l3.600 3.600" stroke="#e2e2e2" stroke-width="1.700"/></svg>
<svg style="left:11.6px;top:413.5px" width="12" height="12" viewBox="0 0 12 12"><circle cx="2" cy="6" r="1.100" fill="#e2e2e2"/><circle cx="6" cy="6" r="1.100" fill="#e2e2e2"/><circle cx="10" cy="6" r="1.100" fill="#e2e2e2"/></svg>
<svg style="left:24.3px;top:423.7px" width="2.4" height="2.4" viewBox="0 0 2.4 2.4"><path d="M2.4 0v2.4H0z" fill="#d0d0d0"/></svg>
<svg style="left:9px;top:429.5px" width="7" height="7" viewBox="0 0 7 7"><rect x="0" y="0" width="4.500" height="4.500" fill="#111" stroke="#e2e2e2" stroke-width="0.800"/><rect x="2.500" y="2.500" width="4.500" height="4.500" fill="#e2e2e2"/></svg>
<svg style="left:19px;top:429.5px" width="7" height="7" viewBox="0 0 7 7"><path d="M1.500 0L0 1.700 1.500 3.400M0 1.700h3.800a1.700 1.700 0 0 1 1.700 1.700V7M4 5.500L5.500 7 7 5.500" stroke="#e2e2e2" fill="none" stroke-width="1.1" stroke-width="0.800"/></svg>
<div class="a" style="left:14.5px;top:446.5px;width:11.5px;height:11.5px;background:#ffffff;border:0.500px solid #222"></div>
<div class="a" style="left:8.8px;top:440px;width:11.2px;height:11.2px;background:#4fbf7a;border:1px solid #e8e8e8"></div>
<svg style="left:11.6px;top:463.5px" width="12" height="12" viewBox="0 0 12 12"><rect x="0.500" y="1.500" width="11" height="9" rx=".600" stroke="#e2e2e2" fill="none" stroke-width="1.1"/><circle cx="6" cy="6" r="2.400" stroke="#e2e2e2" fill="none" stroke-width="1.1" stroke-dasharray="1.200 .8" stroke-width="0.900"/></svg>
<svg style="left:11.6px;top:479.5px" width="12" height="12" viewBox="0 0 12 12"><rect x="3.500" y="1.500" width="8" height="6" stroke="#e2e2e2" fill="none" stroke-width="1.1"/><rect x="0.500" y="4.500" width="8" height="6" fill="#535353" stroke="#e2e2e2" fill="none" stroke-width="1.1"/></svg>
<svg style="left:24.3px;top:489.7px" width="2.4" height="2.4" viewBox="0 0 2.4 2.4"><path d="M2.4 0v2.4H0z" fill="#d0d0d0"/></svg>

<div class="a" style="left:31px;top:59px;width:832px;height:16px;background:#424242;"></div>
<div class="a" style="left:31px;top:59.5px;width:227px;height:15.5px;background:#535353;border-right:1px solid #383838"></div>
<div class="t b" style="left:37px;top:67.3px;font-size:7.6px;color:#f4f4f4;transform:translateY(-50%) scaleX(0.872);transform-origin:0 50%;">3DCollective_HDRi_070_1700_4K.hdr @ 25% (Layer 0, RGB/32*) *</div>
<svg style="left:246.5px;top:64.5px" width="5" height="5" viewBox="0 0 5 5"><path d="M0.500 .5l4 4m0-4l-4 4" stroke="#a0a0a0" stroke-width="0.800" fill="none"/></svg>
<div class="a" style="left:31px;top:75px;width:820px;height:12px;background:#494949;"></div>
<div class="a" style="left:31px;top:87px;width:10px;height:517.2px;background:#494949;"></div>
<div class="a" style="left:31px;top:75px;width:10px;height:12px;background:#4f4f4f;"></div>
<div class="a" style="left:56.7px;top:76px;width:1px;height:11px;background:#5f5f5f;"></div>
<div class="a" style="left:64.4px;top:85px;width:1px;height:2px;background:#5a5a5a;"></div>
<div class="a" style="left:72.1px;top:85px;width:1px;height:2px;background:#5a5a5a;"></div>
<div class="a" style="left:79.8px;top:85px;width:1px;height:2px;background:#5a5a5a;"></div>
<div class="t " style="left:59.2px;top:80.5px;font-size:5.2px;color:#7e7e7e;">600</div>
<div class="a" style="left:87.5px;top:76px;width:1px;height:11px;background:#5f5f5f;"></div>
<div class="a" style="left:95.2px;top:85px;width:1px;height:2px;background:#5a5a5a;"></div>
<div class="a" style="left:102.9px;top:85px;width:1px;height:2px;background:#5a5a5a;"></div>
<div class="a" style="left:110.5px;top:85px;width:1px;height:2px;background:#5a5a5a;"></div>
<div class="t " style="left:90.0px;top:80.5px;font-size:5.2px;color:#7e7e7e;">400</div>
<div class="a" style="left:118.2px;top:76px;width:1px;height:11px;background:#5f5f5f;"></div>
<div class="a" style="left:125.9px;top:85px;width:1px;height:2px;background:#5a5a5a;"></div>
<div class="a" style="left:133.6px;top:85px;width:1px;height:2px;background:#5a5a5a;"></div>
<div class="a" style="left:141.3px;top:85px;width:1px;height:2px;background:#5a5a5a;"></div>
<div class="t " style="left:120.7px;top:80.5px;font-size:5.2px;color:#7e7e7e;">200</div>
<div class="a" style="left:149.0px;top:76px;width:1px;height:11px;background:#5f5f5f;"></div>
<div class="a" style="left:156.7px;top:85px;width:1px;height:2px;background:#5a5a5a;"></div>
<div class="a" style="left:164.4px;top:85px;width:1px;height:2px;background:#5a5a5a;"></div>
<div class="a" style="left:172.1px;top:85px;width:1px;height:2px;background:#5a5a5a;"></div>
<div class="t " style="left:151.5px;top:80.5px;font-size:5.2px;color:#7e7e7e;">0</div>
<div class="a" style="left:179.8px;top:76px;width:1px;height:11px;background:#5f5f5f;"></div>
<div class="a" style="left:187.4px;top:85px;width:1px;height:2px;background:#5a5a5a;"></div>
<div class="a" style="left:195.1px;top:85px;width:1px;height:2px;background:#5a5a5a;"></div>
<div class="a" style="left:202.8px;top:85px;width:1px;height:2px;background:#5a5a5a;"></div>
<div class="t " style="left:182.3px;top:80.5px;font-size:5.2px;color:#7e7e7e;">200</div>
<div class="a" style="left:210.5px;top:76px;width:1px;height:11px;background:#5f5f5f;"></div>
<div class="a" style="left:218.2px;top:85px;width:1px;height:2px;background:#5a5a5a;"></div>
<div class="a" style="left:225.9px;top:85px;width:1px;height:2px;background:#5a5a5a;"></div>
<div class="a" style="left:233.6px;top:85px;width:1px;height:2px;background:#5a5a5a;"></div>
<div class="t " style="left:213.0px;top:80.5px;font-size:5.2px;color:#7e7e7e;">400</div>
<div class="a" style="left:241.3px;top:76px;width:1px;height:11px;background:#5f5f5f;"></div>
<div class="a" style="left:249.0px;top:85px;width:1px;height:2px;background:#5a5a5a;"></div>
<div class="a" style="left:256.7px;top:85px;width:1px;height:2px;background:#5a5a5a;"></div>
<div class="a" style="left:264.4px;top:85px;width:1px;height:2px;background:#5a5a5a;"></div>
<div class="t " style="left:243.8px;top:80.5px;font-size:5.2px;color:#7e7e7e;">600</div>
<div class="a" style="left:272.0px;top:76px;width:1px;height:11px;background:#5f5f5f;"></div>
<div class="a" style="left:279.7px;top:85px;width:1px;height:2px;background:#5a5a5a;"></div>
<div class="a" style="left:287.4px;top:85px;width:1px;height:2px;background:#5a5a5a;"></div>
<div class="a" style="left:295.1px;top:85px;width:1px;height:2px;background:#5a5a5a;"></div>
<div class="t " style="left:274.5px;top:80.5px;font-size:5.2px;color:#7e7e7e;">800</div>
<div class="a" style="left:302.8px;top:76px;width:1px;height:11px;background:#5f5f5f;"></div>
<div class="a" style="left:310.5px;top:85px;width:1px;height:2px;background:#5a5a5a;"></div>
<div class="a" style="left:318.2px;top:85px;width:1px;height:2px;background:#5a5a5a;"></div>
<div class="a" style="left:325.9px;top:85px;width:1px;height:2px;background:#5a5a5a;"></div>
<div class="t " style="left:305.3px;top:80.5px;font-size:5.2px;color:#7e7e7e;">1000</div>
<div class="a" style="left:333.6px;top:76px;width:1px;height:11px;background:#5f5f5f;"></div>
<div class="a" style="left:341.2px;top:85px;width:1px;height:2px;background:#5a5a5a;"></div>
<div class="a" style="left:348.9px;top:85px;width:1px;height:2px;background:#5a5a5a;"></div>
<div class="a" style="left:356.6px;top:85px;width:1px;height:2px;background:#5a5a5a;"></div>
<div class="t " style="left:336.1px;top:80.5px;font-size:5.2px;color:#7e7e7e;">1200</div>
<div class="a" style="left:364.3px;top:76px;width:1px;height:11px;background:#5f5f5f;"></div>
<div class="a" style="left:372.0px;top:85px;width:1px;height:2px;background:#5a5a5a;"></div>
<div class="a" style="left:379.7px;top:85px;width:1px;height:2px;background:#5a5a5a;"></div>
<div class="a" style="left:387.4px;top:85px;width:1px;height:2px;background:#5a5a5a;"></div>
<div class="t " style="left:366.8px;top:80.5px;font-size:5.2px;color:#7e7e7e;">1400</div>
<div class="a" style="left:395.1px;top:76px;width:1px;height:11px;background:#5f5f5f;"></div>
<div class="a" style="left:402.8px;top:85px;width:1px;height:2px;background:#5a5a5a;"></div>
<div class="a" style="left:410.5px;top:85px;width:1px;height:2px;background:#5a5a5a;"></div>
<div class="a" style="left:418.2px;top:85px;width:1px;height:2px;background:#5a5a5a;"></div>
<div class="t " style="left:397.6px;top:80.5px;font-size:5.2px;color:#7e7e7e;">1600</div>
<div class="a" style="left:425.8px;top:76px;width:1px;height:11px;background:#5f5f5f;"></div>
<div class="a" style="left:433.5px;top:85px;width:1px;height:2px;background:#5a5a5a;"></div>
<div class="a" style="left:441.2px;top:85px;width:1px;height:2px;background:#5a5a5a;"></div>
<div class="a" style="left:448.9px;top:85px;width:1px;height:2px;background:#5a5a5a;"></div>
<div class="t " style="left:428.3px;top:80.5px;font-size:5.2px;color:#7e7e7e;">1800</div>
<div class="a" style="left:456.6px;top:76px;width:1px;height:11px;background:#5f5f5f;"></div>
<div class="a" style="left:464.3px;top:85px;width:1px;height:2px;background:#5a5a5a;"></div>
<div class="a" style="left:472.0px;top:85px;width:1px;height:2px;background:#5a5a5a;"></div>
<div class="a" style="left:479.7px;top:85px;width:1px;height:2px;background:#5a5a5a;"></div>
<div class="t " style="left:459.1px;top:80.5px;font-size:5.2px;color:#7e7e7e;">2000</div>
<div class="a" style="left:487.4px;top:76px;width:1px;height:11px;background:#5f5f5f;"></div>
<div class="a" style="left:495.1px;top:85px;width:1px;height:2px;background:#5a5a5a;"></div>
<div class="a" style="left:502.7px;top:85px;width:1px;height:2px;background:#5a5a5a;"></div>
<div class="a" style="left:510.4px;top:85px;width:1px;height:2px;background:#5a5a5a;"></div>
<div class="t " style="left:489.9px;top:80.5px;font-size:5.2px;color:#7e7e7e;">2200</div>
<div class="a" style="left:518.1px;top:76px;width:1px;height:11px;background:#5f5f5f;"></div>
<div class="a" style="left:525.8px;top:85px;width:1px;height:2px;background:#5a5a5a;"></div>
<div class="a" style="left:533.5px;top:85px;width:1px;height:2px;background:#5a5a5a;"></div>
<div class="a" style="left:541.2px;top:85px;width:1px;height:2px;background:#5a5a5a;"></div>
<div class="t " style="left:520.6px;top:80.5px;font-size:5.2px;color:#7e7e7e;">2400</div>
<div class="a" style="left:548.9px;top:76px;width:1px;height:11px;background:#5f5f5f;"></div>
<div class="a" style="left:556.6px;top:85px;width:1px;height:2px;background:#5a5a5a;"></div>
<div class="a" style="left:564.3px;top:85px;width:1px;height:2px;background:#5a5a5a;"></div>
<div class="a" style="left:572.0px;top:85px;width:1px;height:2px;background:#5a5a5a;"></div>
<div class="t " style="left:551.4px;top:80.5px;font-size:5.2px;color:#7e7e7e;">2600</div>
<div class="a" style="left:579.6px;top:76px;width:1px;height:11px;background:#5f5f5f;"></div>
<div class="a" style="left:587.3px;top:85px;width:1px;height:2px;background:#5a5a5a;"></div>
<div class="a" style="left:595.0px;top:85px;width:1px;height:2px;background:#5a5a5a;"></div>
<div class="a" style="left:602.7px;top:85px;width:1px;height:2px;background:#5a5a5a;"></div>
<div class="t " style="left:582.1px;top:80.5px;font-size:5.2px;color:#7e7e7e;">2800</div>
<div class="a" style="left:610.4px;top:76px;width:1px;height:11px;background:#5f5f5f;"></div>
<div class="a" style="left:618.1px;top:85px;width:1px;height:2px;background:#5a5a5a;"></div>
<div class="a" style="left:625.8px;top:85px;width:1px;height:2px;background:#5a5a5a;"></div>
<div class="a" style="left:633.5px;top:85px;width:1px;height:2px;background:#5a5a5a;"></div>
<div class="t " style="left:612.9px;top:80.5px;font-size:5.2px;color:#7e7e7e;">3000</div>
<div class="a" style="left:641.2px;top:76px;width:1px;height:11px;background:#5f5f5f;"></div>
<div class="a" style="left:648.9px;top:85px;width:1px;height:2px;background:#5a5a5a;"></div>
<div class="a" style="left:656.5px;top:85px;width:1px;height:2px;background:#5a5a5a;"></div>
<div class="a" style="left:664.2px;top:85px;width:1px;height:2px;background:#5a5a5a;"></div>
<div class="t " style="left:643.7px;top:80.5px;font-size:5.2px;color:#7e7e7e;">3200</div>
<div class="a" style="left:671.9px;top:76px;width:1px;height:11px;background:#5f5f5f;"></div>
<div class="a" style="left:679.6px;top:85px;width:1px;height:2px;background:#5a5a5a;"></div>
<div class="a" style="left:687.3px;top:85px;width:1px;height:2px;background:#5a5a5a;"></div>
<div class="a" style="left:695.0px;top:85px;width:1px;height:2px;background:#5a5a5a;"></div>
<div class="t " style="left:674.4px;top:80.5px;font-size:5.2px;color:#7e7e7e;">3400</div>
<div class="a" style="left:702.7px;top:76px;width:1px;height:11px;background:#5f5f5f;"></div>
<div class="a" style="left:710.4px;top:85px;width:1px;height:2px;background:#5a5a5a;"></div>
<div class="a" style="left:718.1px;top:85px;width:1px;height:2px;background:#5a5a5a;"></div>
<div class="a" style="left:725.8px;top:85px;width:1px;height:2px;background:#5a5a5a;"></div>
<div class="t " style="left:705.2px;top:80.5px;font-size:5.2px;color:#7e7e7e;">3600</div>
<div class="a" style="left:733.4px;top:76px;width:1px;height:11px;background:#5f5f5f;"></div>
<div class="a" style="left:741.1px;top:85px;width:1px;height:2px;background:#5a5a5a;"></div>
<div class="a" style="left:748.8px;top:85px;width:1px;height:2px;background:#5a5a5a;"></div>
<div class="a" style="left:756.5px;top:85px;width:1px;height:2px;background:#5a5a5a;"></div>
<div class="t " style="left:735.9px;top:80.5px;font-size:5.2px;color:#7e7e7e;">3800</div>
<div class="a" style="left:764.2px;top:76px;width:1px;height:11px;background:#5f5f5f;"></div>
<div class="a" style="left:771.9px;top:85px;width:1px;height:2px;background:#5a5a5a;"></div>
<div class="a" style="left:779.6px;top:85px;width:1px;height:2px;background:#5a5a5a;"></div>
<div class="a" style="left:787.3px;top:85px;width:1px;height:2px;background:#5a5a5a;"></div>
<div class="t " style="left:766.7px;top:80.5px;font-size:5.2px;color:#7e7e7e;">4000</div>
<div class="a" style="left:795.0px;top:76px;width:1px;height:11px;background:#5f5f5f;"></div>
<div class="a" style="left:802.7px;top:85px;width:1px;height:2px;background:#5a5a5a;"></div>
<div class="a" style="left:810.3px;top:85px;width:1px;height:2px;background:#5a5a5a;"></div>
<div class="a" style="left:818.0px;top:85px;width:1px;height:2px;background:#5a5a5a;"></div>
<div class="t " style="left:797.5px;top:80.5px;font-size:5.2px;color:#7e7e7e;">4200</div>
<div class="a" style="left:825.7px;top:76px;width:1px;height:11px;background:#5f5f5f;"></div>
<div class="a" style="left:833.4px;top:85px;width:1px;height:2px;background:#5a5a5a;"></div>
<div class="a" style="left:841.1px;top:85px;width:1px;height:2px;background:#5a5a5a;"></div>
<div class="a" style="left:848.8px;top:85px;width:1px;height:2px;background:#5a5a5a;"></div>
<div class="t " style="left:828.2px;top:80.5px;font-size:5.2px;color:#7e7e7e;">4400</div>
<div class="a" style="left:446.7px;top:77.5px;width:1.2px;height:6.5px;background:#f0f0f0;"></div>
<div class="a" style="left:32px;top:90.7px;width:9px;height:1px;background:#5f5f5f;"></div>
<div class="a" style="left:39px;top:98.4px;width:2px;height:1px;background:#5a5a5a;"></div>
<div class="a" style="left:39px;top:106.1px;width:2px;height:1px;background:#5a5a5a;"></div>
<div class="a" style="left:39px;top:113.8px;width:2px;height:1px;background:#5a5a5a;"></div>
<div class="t" style="left:33px;top:93.2px;font-size:5.4px;line-height:4.5px;height:auto;width:6px;text-align:center;color:#878787;transform:none;white-space:normal">6<br>0<br>0</div>
<div class="a" style="left:32px;top:121.5px;width:9px;height:1px;background:#5f5f5f;"></div>
<div class="a" style="left:39px;top:129.2px;width:2px;height:1px;background:#5a5a5a;"></div>
<div class="a" style="left:39px;top:136.9px;width:2px;height:1px;background:#5a5a5a;"></div>
<div class="a" style="left:39px;top:144.5px;width:2px;height:1px;background:#5a5a5a;"></div>
<div class="t" style="left:33px;top:124.0px;font-size:5.4px;line-height:4.5px;height:auto;width:6px;text-align:center;color:#878787;transform:none;white-space:normal">4<br>0<br>0</div>
<div class="a" style="left:32px;top:152.2px;width:9px;height:1px;background:#5f5f5f;"></div>
<div class="a" style="left:39px;top:159.9px;width:2px;height:1px;background:#5a5a5a;"></div>
<div class="a" style="left:39px;top:167.6px;width:2px;height:1px;background:#5a5a5a;"></div>
<div class="a" style="left:39px;top:175.3px;width:2px;height:1px;background:#5a5a5a;"></div>
<div class="t" style="left:33px;top:154.7px;font-size:5.4px;line-height:4.5px;height:auto;width:6px;text-align:center;color:#878787;transform:none;white-space:normal">2<br>0<br>0</div>
<div class="a" style="left:32px;top:183.0px;width:9px;height:1px;background:#5f5f5f;"></div>
<div class="a" style="left:39px;top:190.7px;width:2px;height:1px;background:#5a5a5a;"></div>
<div class="a" style="left:39px;top:198.4px;width:2px;height:1px;background:#5a5a5a;"></div>
<div class="a" style="left:39px;top:206.1px;width:2px;height:1px;background:#5a5a5a;"></div>
<div class="t" style="left:33px;top:185.5px;font-size:5.4px;line-height:4.5px;height:auto;width:6px;text-align:center;color:#878787;transform:none;white-space:normal">0</div>
<div class="a" style="left:32px;top:213.8px;width:9px;height:1px;background:#5f5f5f;"></div>
<div class="a" style="left:39px;top:221.4px;width:2px;height:1px;background:#5a5a5a;"></div>
<div class="a" style="left:39px;top:229.1px;width:2px;height:1px;background:#5a5a5a;"></div>
<div class="a" style="left:39px;top:236.8px;width:2px;height:1px;background:#5a5a5a;"></div>
<div class="t" style="left:33px;top:216.3px;font-size:5.4px;line-height:4.5px;height:auto;width:6px;text-align:center;color:#878787;transform:none;white-space:normal">2<br>0<br>0</div>
<div class="a" style="left:32px;top:244.5px;width:9px;height:1px;background:#5f5f5f;"></div>
<div class="a" style="left:39px;top:252.2px;width:2px;height:1px;background:#5a5a5a;"></div>
<div class="a" style="left:39px;top:259.9px;width:2px;height:1px;background:#5a5a5a;"></div>
<div class="a" style="left:39px;top:267.6px;width:2px;height:1px;background:#5a5a5a;"></div>
<div class="t" style="left:33px;top:247.0px;font-size:5.4px;line-height:4.5px;height:auto;width:6px;text-align:center;color:#878787;transform:none;white-space:normal">4<br>0<br>0</div>
<div class="a" style="left:32px;top:275.3px;width:9px;height:1px;background:#5f5f5f;"></div>
<div class="a" style="left:39px;top:283.0px;width:2px;height:1px;background:#5a5a5a;"></div>
<div class="a" style="left:39px;top:290.7px;width:2px;height:1px;background:#5a5a5a;"></div>
<div class="a" style="left:39px;top:298.3px;width:2px;height:1px;background:#5a5a5a;"></div>
<div class="t" style="left:33px;top:277.8px;font-size:5.4px;line-height:4.5px;height:auto;width:6px;text-align:center;color:#878787;transform:none;white-space:normal">6<br>0<br>0</div>
<div class="a" style="left:32px;top:306.0px;width:9px;height:1px;background:#5f5f5f;"></div>
<div class="a" style="left:39px;top:313.7px;width:2px;height:1px;background:#5a5a5a;"></div>
<div class="a" style="left:39px;top:321.4px;width:2px;height:1px;background:#5a5a5a;"></div>
<div class="a" style="left:39px;top:329.1px;width:2px;height:1px;background:#5a5a5a;"></div>
<div class="t" style="left:33px;top:308.5px;font-size:5.4px;line-height:4.5px;height:auto;width:6px;text-align:center;color:#878787;transform:none;white-space:normal">8<br>0<br>0</div>
<div class="a" style="left:32px;top:336.8px;width:9px;height:1px;background:#5f5f5f;"></div>
<div class="a" style="left:39px;top:344.5px;width:2px;height:1px;background:#5a5a5a;"></div>
<div class="a" style="left:39px;top:352.2px;width:2px;height:1px;background:#5a5a5a;"></div>
<div class="a" style="left:39px;top:359.9px;width:2px;height:1px;background:#5a5a5a;"></div>
<div class="t" style="left:33px;top:339.3px;font-size:5.4px;line-height:4.5px;height:auto;width:6px;text-align:center;color:#878787;transform:none;white-space:normal">1<br>0<br>0<br>0</div>
<div class="a" style="left:32px;top:367.6px;width:9px;height:1px;background:#5f5f5f;"></div>
<div class="a" style="left:39px;top:375.2px;width:2px;height:1px;background:#5a5a5a;"></div>
<div class="a" style="left:39px;top:382.9px;width:2px;height:1px;background:#5a5a5a;"></div>
<div class="a" style="left:39px;top:390.6px;width:2px;height:1px;background:#5a5a5a;"></div>
<div class="t" style="left:33px;top:370.1px;font-size:5.4px;line-height:4.5px;height:auto;width:6px;text-align:center;color:#878787;transform:none;white-space:normal">1<br>2<br>0<br>0</div>
<div class="a" style="left:32px;top:398.3px;width:9px;height:1px;background:#5f5f5f;"></div>
<div class="a" style="left:39px;top:406.0px;width:2px;height:1px;background:#5a5a5a;"></div>
<div class="a" style="left:39px;top:413.7px;width:2px;height:1px;background:#5a5a5a;"></div>
<div class="a" style="left:39px;top:421.4px;width:2px;height:1px;background:#5a5a5a;"></div>
<div class="t" style="left:33px;top:400.8px;font-size:5.4px;line-height:4.5px;height:auto;width:6px;text-align:center;color:#878787;transform:none;white-space:normal">1<br>4<br>0<br>0</div>
<div class="a" style="left:32px;top:429.1px;width:9px;height:1px;background:#5f5f5f;"></div>
<div class="a" style="left:39px;top:436.8px;width:2px;height:1px;background:#5a5a5a;"></div>
<div class="a" style="left:39px;top:444.5px;width:2px;height:1px;background:#5a5a5a;"></div>
<div class="a" style="left:39px;top:452.2px;width:2px;height:1px;background:#5a5a5a;"></div>
<div class="t" style="left:33px;top:431.6px;font-size:5.4px;line-height:4.5px;height:auto;width:6px;text-align:center;color:#878787;transform:none;white-space:normal">1<br>6<br>0<br>0</div>
<div class="a" style="left:32px;top:459.8px;width:9px;height:1px;background:#5f5f5f;"></div>
<div class="a" style="left:39px;top:467.5px;width:2px;height:1px;background:#5a5a5a;"></div>
<div class="a" style="left:39px;top:475.2px;width:2px;height:1px;background:#5a5a5a;"></div>
<div class="a" style="left:39px;top:482.9px;width:2px;height:1px;background:#5a5a5a;"></div>
<div class="t" style="left:33px;top:462.3px;font-size:5.4px;line-height:4.5px;height:auto;width:6px;text-align:center;color:#878787;transform:none;white-space:normal">1<br>8<br>0<br>0</div>
<div class="a" style="left:32px;top:490.6px;width:9px;height:1px;background:#5f5f5f;"></div>
<div class="a" style="left:39px;top:498.3px;width:2px;height:1px;background:#5a5a5a;"></div>
<div class="a" style="left:39px;top:506.0px;width:2px;height:1px;background:#5a5a5a;"></div>
<div class="a" style="left:39px;top:513.7px;width:2px;height:1px;background:#5a5a5a;"></div>
<div class="t" style="left:33px;top:493.1px;font-size:5.4px;line-height:4.5px;height:auto;width:6px;text-align:center;color:#878787;transform:none;white-space:normal">2<br>0<br>0<br>0</div>
<div class="a" style="left:32px;top:521.4px;width:9px;height:1px;background:#5f5f5f;"></div>
<div class="a" style="left:39px;top:529.1px;width:2px;height:1px;background:#5a5a5a;"></div>
<div class="a" style="left:39px;top:536.7px;width:2px;height:1px;background:#5a5a5a;"></div>
<div class="a" style="left:39px;top:544.4px;width:2px;height:1px;background:#5a5a5a;"></div>
<div class="t" style="left:33px;top:523.9px;font-size:5.4px;line-height:4.5px;height:auto;width:6px;text-align:center;color:#878787;transform:none;white-space:normal">2<br>2<br>0<br>0</div>
<div class="a" style="left:32px;top:552.1px;width:9px;height:1px;background:#5f5f5f;"></div>
<div class="a" style="left:39px;top:559.8px;width:2px;height:1px;background:#5a5a5a;"></div>
<div class="a" style="left:39px;top:567.5px;width:2px;height:1px;background:#5a5a5a;"></div>
<div class="a" style="left:39px;top:575.2px;width:2px;height:1px;background:#5a5a5a;"></div>
<div class="t" style="left:33px;top:554.6px;font-size:5.4px;line-height:4.5px;height:auto;width:6px;text-align:center;color:#878787;transform:none;white-space:normal">2<br>4<br>0<br>0</div>
<div class="a" style="left:32px;top:582.9px;width:9px;height:1px;background:#5f5f5f;"></div>
<div class="a" style="left:39px;top:590.6px;width:2px;height:1px;background:#5a5a5a;"></div>
<div class="a" style="left:39px;top:598.3px;width:2px;height:1px;background:#5a5a5a;"></div>
<div class="t" style="left:33px;top:585.4px;font-size:5.4px;line-height:4.5px;height:auto;width:6px;text-align:center;color:#878787;transform:none;white-space:normal">2<br>6<br>0<br>0</div>
<div class="a" style="left:32px;top:282px;width:6.5px;height:1.2px;background:#e8e8e8;"></div>
<div class="a" style="left:41px;top:87px;width:810px;height:517.2px;background:#282828;"></div>
<div class="a" style="left:148.5px;top:182.5px;width:631px;height:316px;background:#111;"></div>
<div class="a" style="left:149px;top:183px;width:630px;height:160.5px;background:#ffffff;background:radial-gradient(ellipse 190px 80px at 10px 12px,rgba(214,249,252,.8),rgba(222,250,253,.6) 50%,rgba(255,255,255,0) 100%),radial-gradient(ellipse 110px 80px at 600px 30px,rgba(214,249,252,.8),rgba(222,250,253,.62) 50%,rgba(255,255,255,0) 100%),radial-gradient(ellipse 45px 10px at 118px 68px,rgba(228,251,252,.6),rgba(255,255,255,0) 100%),linear-gradient(to bottom,rgba(240,253,254,.35),rgba(255,255,255,0) 14px),#fff;"></div>
<div class="a" style="left:149px;top:343.5px;width:630px;height:154.5px;background:#000;"></div>
<div class="a" style="left:851px;top:75px;width:10px;height:530px;background:#4b4b4b;"></div>
<div class="a" style="left:852px;top:234px;width:8px;height:215px;background:#6b6b6b;"></div>
<svg style="left:854px;top:598px" width="5" height="4" viewBox="0 0 5 4"><path d="M0.500 .5l2 2 2-2" stroke="#9a9a9a" stroke-width="0.800" fill="none"/></svg>
<svg style="left:854px;top:80px" width="5" height="4" viewBox="0 0 5 4"><path d="M0.500 3.200l2-2 2 2" stroke="#777" stroke-width="0.800" fill="none"/></svg>
<div class="a" style="left:31px;top:604.2px;width:830px;height:9.3px;background:#4b4b4b;"></div>
<div class="a" style="left:5.3px;top:613.5px;width:1057.9px;height:1.8px;background:#383838;"></div>
<div class="a" style="left:33px;top:604.2px;width:28px;height:9.3px;background:#454545;"></div>
<div class="t " style="left:40px;top:609.8px;font-size:7px;color:#f0f0f0;transform:translateY(-50%) scaleX(0.857);transform-origin:0 50%;">25%</div>
<div class="t " style="left:75.6px;top:609.8px;font-size:7px;color:#d8d8d8;transform:translateY(-50%) scaleX(0.875);transform-origin:0 50%;">4096 px x 2048 px (72 ppi)</div>
<svg style="left:166px;top:607px" width="4" height="6" viewBox="0 0 4 6"><path d="M0.800 .6l2.200 2.300-2.200 2.300" stroke="#bdbdbd" stroke-width="0.800" fill="none"/></svg>
<svg style="left:177px;top:607px" width="4" height="6" viewBox="0 0 4 6"><path d="M3 .6L.8 2.900 3 5.200" stroke="#777" stroke-width="0.800" fill="none"/></svg>
<div class="a" style="left:383px;top:605.2px;width:249px;height:7.6px;background:#6b6b6b;"></div>
<svg style="left:845px;top:607px" width="4" height="6" viewBox="0 0 4 6"><path d="M0.800 .6l2.200 2.300-2.200 2.300" stroke="#8a8a8a" stroke-width="0.800" fill="none"/></svg>
<div class="a" style="left:861px;top:59px;width:2px;height:554.5px;background:#3a3a3a;"></div>

<div class="a" style="left:863px;top:59px;width:200px;height:7px;background:#3a3a3a;"></div>
<svg style="left:877px;top:60.5px" width="6" height="4" viewBox="0 0 6 4"><path d="M2.100 .3L.5 2l1.600 1.700M4.900 .3L3.300 2l1.600 1.700" stroke="#cfcfcf" stroke-width="0.800" fill="none"/></svg>
<svg style="left:1053px;top:60.5px" width="6" height="4" viewBox="0 0 6 4"><path d="M0.500 .3l1.600 1.700-1.600 1.700M3.300 .3l1.600 1.700-1.600 1.700" stroke="#cfcfcf" stroke-width="0.800" fill="none"/></svg>
<div class="a" style="left:863px;top:66px;width:22px;height:547.5px;background:#535353;"></div>
<div class="a" style="left:863px;top:104px;width:22px;height:1px;background:#3a3a3a;"></div>
<div class="a" style="left:885px;top:59px;width:2px;height:554.5px;background:#3a3a3a;"></div>
<svg style="left:869px;top:74px" width="12" height="12" viewBox="0 0 12 12"><rect x="1" y="0.500" width="3" height="2.600" fill="none" stroke="#e2e2e2" stroke-width="0.800"/><rect x="1" y="4.300" width="3" height="2.600" fill="none" stroke="#e2e2e2" stroke-width="0.800"/><rect x="1" y="8.100" width="3" height="2.600" fill="#e2e2e2" stroke="#e2e2e2" stroke-width="0.800"/><path d="M6.500 1.500h2a2.700 2.700 0 0 1 0 7H7.500" stroke="#e2e2e2" stroke-width="1.200" fill="none"/><path d="M8.500 6.800L6.800 8.500l1.700 1.700" stroke="#e2e2e2" stroke-width="1" fill="none"/></svg>
<svg style="left:869.5px;top:92px" width="10" height="9" viewBox="0 0 10 9"><path d="M0.500 .5h9v6H4.500L2.500 8.500V6.500H.5z" fill="#e2e2e2"/></svg>
<div class="a" style="left:887px;top:66px;width:176px;height:17px;background:#424242;"></div>
<div class="a" style="left:887px;top:83px;width:176px;height:73px;background:#535353;"></div>
<div class="a" style="left:887px;top:156px;width:176px;height:1.5px;background:#3a3a3a;"></div>
<div class="a" style="left:887px;top:66px;width:27px;height:17px;background:#535353;border-right:1px solid #383838"></div>
<div class="a" style="left:914px;top:66px;width:108px;height:16.5px;background:#4a4a4a;border-right:1px solid #383838"></div>
<div class="a" style="left:951px;top:66px;width:1px;height:16.5px;background:#454545;"></div>
<div class="a" style="left:989px;top:66px;width:1px;height:16.5px;background:#454545;"></div>
<div class="t b" style="left:893px;top:73.5px;font-size:7.2px;color:#f4f4f4;transform:translateY(-50%) scaleX(0.851);transform-origin:0 50%;">Color</div>
<div class="t b" style="left:918.7px;top:73.5px;font-size:6.8px;color:#b8b8b8;transform:translateY(-50%) scaleX(0.845);transform-origin:0 50%;">Swatches</div>
<div class="t b" style="left:955.8px;top:73.5px;font-size:6.8px;color:#b8b8b8;transform:translateY(-50%) scaleX(0.882);transform-origin:0 50%;">Gradients</div>
<div class="t b" style="left:994.6px;top:73.5px;font-size:6.8px;color:#b8b8b8;transform:translateY(-50%) scaleX(0.900);transform-origin:0 50%;">Patterns</div>
<svg style="left:1053px;top:71.5px" width="6" height="5" viewBox="0 0 6 5"><path d="M0 .5h6M0 2.500h6M0 4.500h6" stroke="#b4b4b4" stroke-width="0.900"/></svg>
<div class="a" style="left:900px;top:95.5px;width:11.5px;height:12px;background:#fff;border:0.500px solid #333"></div>
<div class="a" style="left:893px;top:89.5px;width:12.2px;height:11.5px;background:#56bd7c;border:1px solid #e8e8e8"></div>
<div class="a" style="left:915px;top:86.7px;width:115.5px;height:56px;background:#2fd15a;background:linear-gradient(to top,rgba(0,0,0,1) 0%,rgba(0,0,0,.77) 4%,rgba(0,0,0,.65) 10%,rgba(0,0,0,.47) 25%,rgba(0,0,0,.27) 50%,rgba(0,0,0,.12) 75%,rgba(0,0,0,0) 100%),linear-gradient(to right,#fff 0%,#e0ffe6 25%,#baf6c6 50%,#88ee9e 75%,#5ae67c 90%,#22e058 100%)"></div>
<svg style="left:1000.6px;top:108.4px" width="8" height="8" viewBox="0 0 8 8"><circle cx="4" cy="4" r="3" stroke="#1a1a1a" stroke-width="0.900" fill="none"/></svg>
<div class="a" style="left:1040.2px;top:87.3px;width:12px;height:56px;background:#f00;background:linear-gradient(to bottom,#ff0060 0%,#ff00e0 12%,#e000ff 22%,#5020ff 31%,#0060ff 36%,#00d0ff 45%,#00ffd0 52%,#00ff50 62%,#80ff00 70%,#ffff00 80%,#ffa000 91%,#ff2000 100%)"></div>
<svg style="left:1034px;top:120px" width="4" height="5.5" viewBox="0 0 4 5.5"><path d="M0 0l4 2.700L0 5.500z" fill="#f0f0f0"/></svg>
<div class="a" style="left:887px;top:157.5px;width:176px;height:17px;background:#424242;"></div>
<div class="a" style="left:887px;top:174.5px;width:176px;height:207.5px;background:#535353;"></div>
<div class="a" style="left:887px;top:157.5px;width:40px;height:17px;background:#535353;border-right:1px solid #383838"></div>
<div class="a" style="left:927px;top:157.5px;width:83px;height:16.5px;background:#4a4a4a;border-right:1px solid #383838"></div>
<div class="a" style="left:976px;top:157.5px;width:1px;height:16.5px;background:#454545;"></div>
<div class="t b" style="left:892.8px;top:166px;font-size:7px;color:#f4f4f4;transform:translateY(-50%) scaleX(0.881);transform-origin:0 50%;">Properties</div>
<div class="t b" style="left:933px;top:166px;font-size:6.8px;color:#b8b8b8;transform:translateY(-50%) scaleX(0.899);transform-origin:0 50%;">Adjustments</div>
<div class="t b" style="left:980.5px;top:166px;font-size:6.8px;color:#b8b8b8;transform:translateY(-50%) scaleX(0.870);transform-origin:0 50%;">Libraries</div>
<svg style="left:1053px;top:163px" width="6" height="5" viewBox="0 0 6 5"><path d="M0 .5h6M0 2.500h6M0 4.500h6" stroke="#b4b4b4" stroke-width="0.900"/></svg>
<svg style="left:894.5px;top:180.5px" width="12" height="11" viewBox="0 0 12 11"><rect x="0.500" y="0.500" width="11" height="10" fill="#3c3c3c" stroke="#e2e2e2" stroke-width="0.900"/><path d="M2 8.500l2.500-3 1.800 2 1.500-1.400L10 8.500z" fill="#e2e2e2"/><circle cx="8.300" cy="3.500" r="1" fill="#e2e2e2"/></svg>
<div class="t " style="left:911.2px;top:186.6px;font-size:7.2px;color:#dcdcdc;transform:translateY(-50%) scaleX(0.800);transform-origin:0 50%;">Pixel Layer</div>
<div class="a" style="left:887px;top:195.5px;width:166px;height:1px;background:#444;"></div>
<svg style="left:891.5px;top:203px" width="6" height="4" viewBox="0 0 6 4"><path d="M0.500 .5l2.500 2.500L5.500.5" stroke="#cfcfcf" stroke-width="0.900" fill="none"/></svg>
<div class="t b" style="left:901.6px;top:205px;font-size:7.2px;color:#f4f4f4;transform:translateY(-50%) scaleX(0.880);transform-origin:0 50%;">Transform</div>
<div class="a" style="left:893px;top:221px;width:14.5px;height:14.5px;background:#3b3b3b;border-radius:1px"></div>
<svg style="left:897.5px;top:223.5px" width="5" height="10" viewBox="0 0 5 10"><rect x="0.800" y="0.600" width="3.400" height="4" rx="1.600" fill="none" stroke="#e2e2e2" stroke-width="0.900"/><rect x="0.800" y="5.400" width="3.400" height="4" rx="1.600" fill="none" stroke="#e2e2e2" stroke-width="0.900"/><path d="M2.500 3v4" stroke="#e2e2e2" stroke-width="0.900"/></svg>
<div class="t " style="left:914.8px;top:220.5px;font-size:7px;color:#d2d2d2;">W</div>
<div class="a" style="left:924.8px;top:215.8px;width:31px;height:9.5px;background:#424242;border:1px solid #3c3c3c"></div>
<div class="t " style="left:927px;top:220.6px;font-size:7px;color:#f0f0f0;transform:translateY(-50%) scaleX(0.883);transform-origin:0 50%;">4096 px</div>
<div class="t " style="left:967.5px;top:220.5px;font-size:7px;color:#d2d2d2;">X</div>
<div class="a" style="left:976px;top:215.8px;width:31px;height:9.5px;background:#424242;border:1px solid #3c3c3c"></div>
<div class="t " style="left:978.5px;top:220.6px;font-size:7px;color:#f0f0f0;transform:translateY(-50%) scaleX(0.907);transform-origin:0 50%;">0 px</div>
<div class="t " style="left:915.5px;top:235.7px;font-size:7px;color:#d2d2d2;">H</div>
<div class="a" style="left:924.8px;top:231px;width:31px;height:9.5px;background:#424242;border:1px solid #3c3c3c"></div>
<div class="t " style="left:927px;top:235.8px;font-size:7px;color:#f0f0f0;transform:translateY(-50%) scaleX(0.883);transform-origin:0 50%;">2048 px</div>
<div class="t " style="left:967.5px;top:235.7px;font-size:7px;color:#d2d2d2;">Y</div>
<div class="a" style="left:976px;top:231px;width:31px;height:9.5px;background:#424242;border:1px solid #3c3c3c"></div>
<div class="t " style="left:978.5px;top:235.8px;font-size:7px;color:#f0f0f0;transform:translateY(-50%) scaleX(0.907);transform-origin:0 50%;">0 px</div>
<svg style="left:912px;top:249px" width="9" height="8" viewBox="0 0 9 8"><path d="M0.500 7.500h8M0.500 7.500L6 .8" stroke="#e2e2e2" stroke-width="0.900" fill="none"/><path d="M4.500 7.500a4 4 0 0 0-1.300-3" stroke="#e2e2e2" stroke-width="0.800" fill="none"/></svg>
<div class="a" style="left:924.8px;top:248px;width:23px;height:9.5px;background:#424242;border:1px solid #3c3c3c"></div>
<div class="t " style="left:927px;top:252.9px;font-size:7px;color:#f0f0f0;transform:translateY(-50%) scaleX(0.883);transform-origin:0 50%;">0,00°</div>
<div class="a" style="left:947.5px;top:248px;width:9.5px;height:9.5px;background:#424242;border:1px solid #3c3c3c"></div>
<svg style="left:949.8px;top:251px" width="5" height="4" viewBox="0 0 5 4"><path d="M0.500 .8l2 2 2-2" stroke="#cfcfcf" stroke-width="0.800" fill="none"/></svg>
<svg style="left:977px;top:248.5px" width="11" height="9" viewBox="0 0 11 9"><path d="M0.500 1.200v6.600L4 4.500z" fill="none" stroke="#e2e2e2" stroke-width="0.900"/><path d="M10.500 1.200v6.600L7 4.500z" fill="#e2e2e2"/><path d="M5.500 0v9" stroke="#e2e2e2" stroke-width="0.800"/></svg>
<svg style="left:995px;top:247.5px" width="9" height="11" viewBox="0 0 9 11"><path d="M1.200 .5h6.600L4.500 4z" fill="none" stroke="#e2e2e2" stroke-width="0.900"/><path d="M1.200 10.500h6.600L4.500 7z" fill="#e2e2e2"/><path d="M0 5.500h9" stroke="#e2e2e2" stroke-width="0.800"/></svg>
<div class="a" style="left:887px;top:267px;width:166px;height:1px;background:#444;"></div>
<svg style="left:891.5px;top:275px" width="6" height="4" viewBox="0 0 6 4"><path d="M0.500 .5l2.500 2.500L5.500.5" stroke="#cfcfcf" stroke-width="0.900" fill="none"/></svg>
<div class="t b" style="left:902.5px;top:276.9px;font-size:7.2px;color:#f4f4f4;transform:translateY(-50%) scaleX(0.885);transform-origin:0 50%;">Align and Distribute</div>
<div class="t " style="left:892.5px;top:290.5px;font-size:7px;color:#cfcfcf;transform:translateY(-50%) scaleX(0.885);transform-origin:0 50%;">Align:</div>
<svg style="left:895px;top:302.2px" width="10" height="10" viewBox="0 0 10 10"><path d="M0.500 0v10" stroke="#a4a4a4" stroke-width="1"/><rect x="2" y="1.800" width="5" height="2.400" fill="#a4a4a4"/><rect x="2" y="5.800" width="7.500" height="2.400" fill="#a4a4a4"/></svg>
<svg style="left:913px;top:302.2px" width="10" height="10" viewBox="0 0 10 10"><path d="M5 0v10" stroke="#a4a4a4" stroke-width="1"/><rect x="2.500" y="1.800" width="5" height="2.400" fill="#a4a4a4"/><rect x="1" y="5.800" width="8" height="2.400" fill="#a4a4a4"/></svg>
<svg style="left:930.3px;top:302.2px" width="10" height="10" viewBox="0 0 10 10"><path d="M9.500 0v10" stroke="#a4a4a4" stroke-width="1"/><rect x="3" y="1.800" width="5" height="2.400" fill="#a4a4a4"/><rect x="0.500" y="5.800" width="7.500" height="2.400" fill="#a4a4a4"/></svg>
<svg style="left:959px;top:302.2px" width="10" height="10" viewBox="0 0 10 10"><path d="M0 .5h10" stroke="#a4a4a4" stroke-width="1"/><rect x="1.800" y="2" width="2.400" height="7.500" fill="#a4a4a4"/><rect x="5.800" y="2" width="2.400" height="5" fill="#a4a4a4"/></svg>
<svg style="left:976.4px;top:302.2px" width="10" height="10" viewBox="0 0 10 10"><path d="M0 5h10" stroke="#a4a4a4" stroke-width="1"/><rect x="1.800" y="1" width="2.400" height="8" fill="#a4a4a4"/><rect x="5.800" y="2.500" width="2.400" height="5" fill="#a4a4a4"/></svg>
<svg style="left:994px;top:302.2px" width="10" height="10" viewBox="0 0 10 10"><path d="M0 9.500h10" stroke="#a4a4a4" stroke-width="1"/><rect x="1.800" y="0.500" width="2.400" height="7.500" fill="#a4a4a4"/><rect x="5.800" y="3" width="2.400" height="5" fill="#a4a4a4"/></svg>
<svg style="left:996.5px;top:325px" width="9" height="2" viewBox="0 0 9 2"><circle cx="1" cy="1" r=".9" fill="#e6e6e6"/><circle cx="4.300" cy="1" r=".9" fill="#e6e6e6"/><circle cx="7.600" cy="1" r=".9" fill="#e6e6e6"/></svg>
<div class="a" style="left:887px;top:334px;width:166px;height:1px;background:#444;"></div>
<svg style="left:891.5px;top:342px" width="6" height="4" viewBox="0 0 6 4"><path d="M0.500 .5l2.500 2.500L5.500.5" stroke="#cfcfcf" stroke-width="0.900" fill="none"/></svg>
<div class="t b" style="left:902px;top:344px;font-size:7.2px;color:#f4f4f4;transform:translateY(-50%) scaleX(0.872);transform-origin:0 50%;">Quick Actions</div>
<div class="a" style="left:1054px;top:197px;width:8px;height:176px;background:#4a4a4a;"></div>
<div class="a" style="left:1055px;top:208px;width:6px;height:116px;background:#6b6b6b;"></div>
<svg style="left:1055.5px;top:200.5px" width="5" height="4" viewBox="0 0 5 4"><path d="M0.500 3.200l2-2 2 2" stroke="#9a9a9a" stroke-width="0.800" fill="none"/></svg>
<svg style="left:1055.5px;top:359px" width="5" height="4" viewBox="0 0 5 4"><path d="M0.500 .8l2 2 2-2" stroke="#9a9a9a" stroke-width="0.800" fill="none"/></svg>
<div class="a" style="left:887px;top:382px;width:176px;height:2px;background:#3a3a3a;"></div>
<div class="a" style="left:887px;top:384px;width:176px;height:17.5px;background:#424242;"></div>
<div class="a" style="left:887px;top:401.5px;width:176px;height:212px;background:#535353;"></div>
<div class="a" style="left:887px;top:384px;width:29px;height:17.5px;background:#535353;border-right:1px solid #383838"></div>
<div class="a" style="left:916px;top:384px;width:63px;height:17px;background:#4a4a4a;border-right:1px solid #383838"></div>
<div class="a" style="left:953px;top:384px;width:1px;height:17px;background:#454545;"></div>
<div class="t b" style="left:892.8px;top:392px;font-size:7px;color:#f4f4f4;transform:translateY(-50%) scaleX(0.820);transform-origin:0 50%;">Layers</div>
<div class="t b" style="left:921.7px;top:392px;font-size:6.8px;color:#b8b8b8;transform:translateY(-50%) scaleX(0.866);transform-origin:0 50%;">Channels</div>
<div class="t b" style="left:958.5px;top:392px;font-size:6.8px;color:#b8b8b8;transform:translateY(-50%) scaleX(0.864);transform-origin:0 50%;">Paths</div>
<svg style="left:1053px;top:389.5px" width="6" height="5" viewBox="0 0 6 5"><path d="M0 .5h6M0 2.500h6M0 4.500h6" stroke="#b4b4b4" stroke-width="0.900"/></svg>
<div class="a" style="left:887px;top:421.3px;width:175.5px;height:1px;background:#484848;"></div>
<div class="a" style="left:887px;top:438.3px;width:175.5px;height:1px;background:#484848;"></div>
<div class="a" style="left:890px;top:407.3px;width:52px;height:11.5px;background:#424242;border:1px solid #3c3c3c;border-radius:1px"></div>
<svg style="left:894px;top:409.8px" width="7" height="7" viewBox="0 0 7 7"><circle cx="2.800" cy="2.800" r="2" stroke="#e2e2e2" stroke-width="1" fill="none"/><path d="M4.300 4.300l2.200 2.200" stroke="#e2e2e2" stroke-width="1.100"/></svg>
<div class="t " style="left:903px;top:413.7px;font-size:7px;color:#f0f0f0;transform:translateY(-50%) scaleX(0.928);transform-origin:0 50%;">Kind</div>
<svg style="left:935.5px;top:411.5px" width="5" height="4" viewBox="0 0 5 4"><path d="M0.500 .8l2 2 2-2" stroke="#cfcfcf" stroke-width="0.800" fill="none"/></svg>
<svg style="left:949.5px;top:409px" width="9" height="8" viewBox="0 0 9 8"><rect x="0.500" y="0.500" width="8" height="7" fill="none" stroke="#e2e2e2" stroke-width="0.900"/><path d="M1.500 6.500l2-2.300 1.500 1.500 1-1 1.500 1.800z" fill="#e2e2e2"/></svg>
<svg style="left:964.4px;top:409px" width="8" height="8" viewBox="0 0 8 8"><circle cx="4" cy="4" r="3.400" fill="none" stroke="#e2e2e2" stroke-width="0.900"/><path d="M4 .6a3.400 3.400 0 0 1 0 6.800z" fill="#e2e2e2" transform="rotate(45 4 4)"/></svg>
<div class="t b" style="left:980.3px;top:413.8px;font-size:9.5px;color:#e2e2e2;font-family:'Liberation Serif',serif;line-height:10px">T</div>
<svg style="left:994px;top:409px" width="8" height="8" viewBox="0 0 8 8"><rect x="1.200" y="1.200" width="5.600" height="5.600" fill="none" stroke="#e2e2e2" stroke-width="0.900"/><rect x="0" y="0" width="2.200" height="2.200" fill="#e2e2e2"/><rect x="5.800" y="0" width="2.200" height="2.200" fill="#e2e2e2"/><rect x="0" y="5.800" width="2.200" height="2.200" fill="#e2e2e2"/><rect x="5.800" y="5.800" width="2.200" height="2.200" fill="#e2e2e2"/></svg>
<svg style="left:1009px;top:408.5px" width="8" height="9" viewBox="0 0 8 9"><path d="M0.500 .5h4.500l2.500 2.500v5.500h-7z" fill="none" stroke="#e2e2e2" stroke-width="0.900"/><rect x="3" y="4.500" width="4" height="3.500" fill="#e2e2e2"/></svg>
<svg style="left:1024.3px;top:407.3px" width="5" height="5" viewBox="0 0 5 5"><circle cx="2.500" cy="2.500" r="2.200" fill="#f2f2f2"/></svg>
<div class="a" style="left:890px;top:424.7px;width:77.5px;height:11px;background:#424242;border:1px solid #3c3c3c;border-radius:1px"></div>
<div class="t " style="left:894.5px;top:430.6px;font-size:7px;color:#f0f0f0;transform:translateY(-50%) scaleX(0.842);transform-origin:0 50%;">Normal</div>
<svg style="left:961.5px;top:428.5px" width="5" height="4" viewBox="0 0 5 4"><path d="M0.500 .8l2 2 2-2" stroke="#cfcfcf" stroke-width="0.800" fill="none"/></svg>
<div class="t " style="left:973px;top:430.6px;font-size:7px;color:#cfcfcf;transform:translateY(-50%) scaleX(0.876);transform-origin:0 50%;">Opacity:</div>
<div class="a" style="left:999px;top:424.7px;width:21px;height:11px;background:#424242;border:1px solid #3c3c3c;border-radius:1px"></div>
<div class="t " style="left:1001.5px;top:430.6px;font-size:7px;color:#f0f0f0;transform:translateY(-50%) scaleX(0.838);transform-origin:0 50%;">100%</div>
<div class="a" style="left:1019.5px;top:424.7px;width:9.5px;height:11px;background:#424242;border:1px solid #3c3c3c;border-radius:1px"></div>
<svg style="left:1021.8px;top:428.5px" width="5" height="4" viewBox="0 0 5 4"><path d="M0.500 .8l2 2 2-2" stroke="#cfcfcf" stroke-width="0.800" fill="none"/></svg>
<div class="t " style="left:891px;top:447.5px;font-size:7px;color:#cfcfcf;transform:translateY(-50%) scaleX(0.837);transform-origin:0 50%;">Lock:</div>
<svg style="left:910.6px;top:443.5px" width="8" height="8" viewBox="0 0 8 8"><rect x="0.400" y="0.400" width="7.200" height="7.200" fill="none" stroke="#e2e2e2" stroke-width="0.800"/><path d="M0.400 .4h2.400v2.400H.4zM5.200 .4h2.400v2.400H5.200zM2.800 2.800h2.400v2.400H2.800zM.4 5.200h2.400v2.400H.4zM5.200 5.200h2.400v2.400H5.200z" fill="#e2e2e2"/></svg>
<svg style="left:924.4px;top:443.2px" width="8" height="9" viewBox="0 0 8 9"><path d="M7.500 .4c.5.400.2 1-.2 1.400L4.500 5.300 3.300 4.300 6.200.8c.4-.5.900-.7 1.300-.4z" fill="#e2e2e2"/><path d="M2.900 4.900c.7.100 1.200.6 1.200 1.300 0 1.200-1.500 1.800-3.300 1.600.7-.6.600-1.200.9-1.900.2-.6.700-1 1.200-1z" fill="#e2e2e2"/></svg>
<svg style="left:937.5px;top:443.2px" width="9" height="9" viewBox="0 0 9 9"><path d="M4.500 .3v8.400M.3 4.500h8.400" stroke="#e2e2e2" stroke-width="0.900"/><path d="M4.500 0l1.500 1.800H3zM4.500 9l1.500-1.800H3zM0 4.500l1.800-1.500v3zM9 4.500L7.200 3v3z" fill="#e2e2e2"/></svg>
<svg style="left:951.5px;top:443.2px" width="9" height="9" viewBox="0 0 9 9"><path d="M2 0v7h7M0 2h7v7" stroke="#e2e2e2" stroke-width="0.900" fill="none"/><path d="M6.500 .5l2 2" stroke="#e2e2e2" stroke-width="0.800"/></svg>
<svg style="left:965.5px;top:442.7px" width="7" height="9" viewBox="0 0 7 9"><rect x="0.500" y="4" width="6" height="4.800" rx=".5" fill="#e2e2e2"/><path d="M1.800 4V2.600a1.700 1.700 0 0 1 3.400 0V4" stroke="#e2e2e2" stroke-width="1" fill="none"/></svg>
<div class="t " style="left:986.4px;top:447.5px;font-size:7px;color:#cfcfcf;transform:translateY(-50%) scaleX(0.827);transform-origin:0 50%;">Fill:</div>
<div class="a" style="left:998px;top:441.3px;width:21px;height:11px;background:#424242;border:1px solid #3c3c3c;border-radius:1px"></div>
<div class="t " style="left:1000.5px;top:447.5px;font-size:7px;color:#f0f0f0;transform:translateY(-50%) scaleX(0.838);transform-origin:0 50%;">100%</div>
<div class="a" style="left:1018.5px;top:441.3px;width:9.5px;height:11px;background:#424242;border:1px solid #3c3c3c;border-radius:1px"></div>
<svg style="left:1020.8px;top:445px" width="5" height="4" viewBox="0 0 5 4"><path d="M0.500 .8l2 2 2-2" stroke="#cfcfcf" stroke-width="0.800" fill="none"/></svg>
<div class="a" style="left:887px;top:455.5px;width:175.5px;height:144.5px;background:#4f4f4f;"></div>
<div class="a" style="left:889.5px;top:457px;width:162.5px;height:15px;background:#6a6a6a;"></div>
<div class="a" style="left:889.5px;top:457px;width:13px;height:15px;background:#595959;"></div>
<svg style="left:892px;top:462.3px" width="9" height="6" viewBox="0 0 9 6"><path d="M0.300 3C1.500 1 3 .3 4.500 .3S7.500 1 8.700 3C7.500 5 6 5.700 4.500 5.700S1.500 5 .3 3z" fill="#e2e2e2"/><circle cx="4.500" cy="3" r="1.400" fill="#595959"/></svg>
<div class="a" style="left:906.5px;top:458.5px;width:23.5px;height:12.5px;background:#000;border:1px solid #f0f0f0"></div>
<div class="a" style="left:907.5px;top:459.5px;width:21.5px;height:5.5px;background:#fff;"></div>
<div class="t " style="left:933.5px;top:465.7px;font-size:7px;color:#f0f0f0;transform:translateY(-50%) scaleX(0.878);transform-origin:0 50%;">Layer 0</div>
<div class="a" style="left:887px;top:600px;width:176px;height:1px;background:#464646;"></div>
<svg style="left:937px;top:604px" width="10" height="5" viewBox="0 0 10 5"><rect x="0.500" y="0.800" width="4.500" height="3.400" rx="1.700" fill="none" stroke="#777" stroke-width="0.900"/><rect x="5" y="0.800" width="4.500" height="3.400" rx="1.700" fill="none" stroke="#777" stroke-width="0.900"/><path d="M3 2.500h4" stroke="#777" stroke-width="0.900"/></svg>
<div class="t b" style="left:954px;top:606.3px;font-size:8px;color:#dadada;font-style:italic;font-family:'Liberation Serif',serif">fx</div>
<svg style="left:962px;top:609.5px" width="2" height="2" viewBox="0 0 2 2"><path d="M2 0v2H0z" fill="#d0d0d0"/></svg>
<svg style="left:970.5px;top:603px" width="9" height="7" viewBox="0 0 9 7"><rect x="0" y="0" width="9" height="7" rx=".8" fill="#dadada"/><circle cx="4.500" cy="3.500" r="2" fill="#535353"/></svg>
<svg style="left:988px;top:602.5px" width="8" height="8" viewBox="0 0 8 8"><circle cx="4" cy="4" r="3.400" fill="none" stroke="#dadada" stroke-width="0.900"/><path d="M4 .6a3.400 3.400 0 0 1 0 6.800z" fill="#dadada" transform="rotate(45 4 4)"/></svg>
<svg style="left:996px;top:609.5px" width="2" height="2" viewBox="0 0 2 2"><path d="M2 0v2H0z" fill="#d0d0d0"/></svg>
<svg style="left:1004px;top:603px" width="9" height="7" viewBox="0 0 9 7"><path d="M0 .8c0-.4.300-.8.800-.8h2.700l.9 1h3.800c.4 0 .8.300.8.800v4.400c0 .4-.3.800-.8.800H.8c-.4 0-.8-.3-.8-.8z" fill="#dadada"/></svg>
<svg style="left:1021px;top:602.5px" width="8" height="8" viewBox="0 0 8 8"><rect x="0.500" y="0.500" width="7" height="7" fill="none" stroke="#dadada" stroke-width="0.900"/><path d="M4 2v4M2 4h4" stroke="#dadada" stroke-width="0.900"/></svg>
<svg style="left:1037.5px;top:602.5px" width="7" height="8" viewBox="0 0 7 8"><path d="M0 1.500h7M2.500 1.500V.5h2v1M.8 1.500l.5 6.200h4.400l.5-6.200" fill="none" stroke="#777" stroke-width="0.900"/><path d="M2.700 3v3.500M4.300 3v3.500" stroke="#777" stroke-width="0.700"/></svg>


</div></body></html>
